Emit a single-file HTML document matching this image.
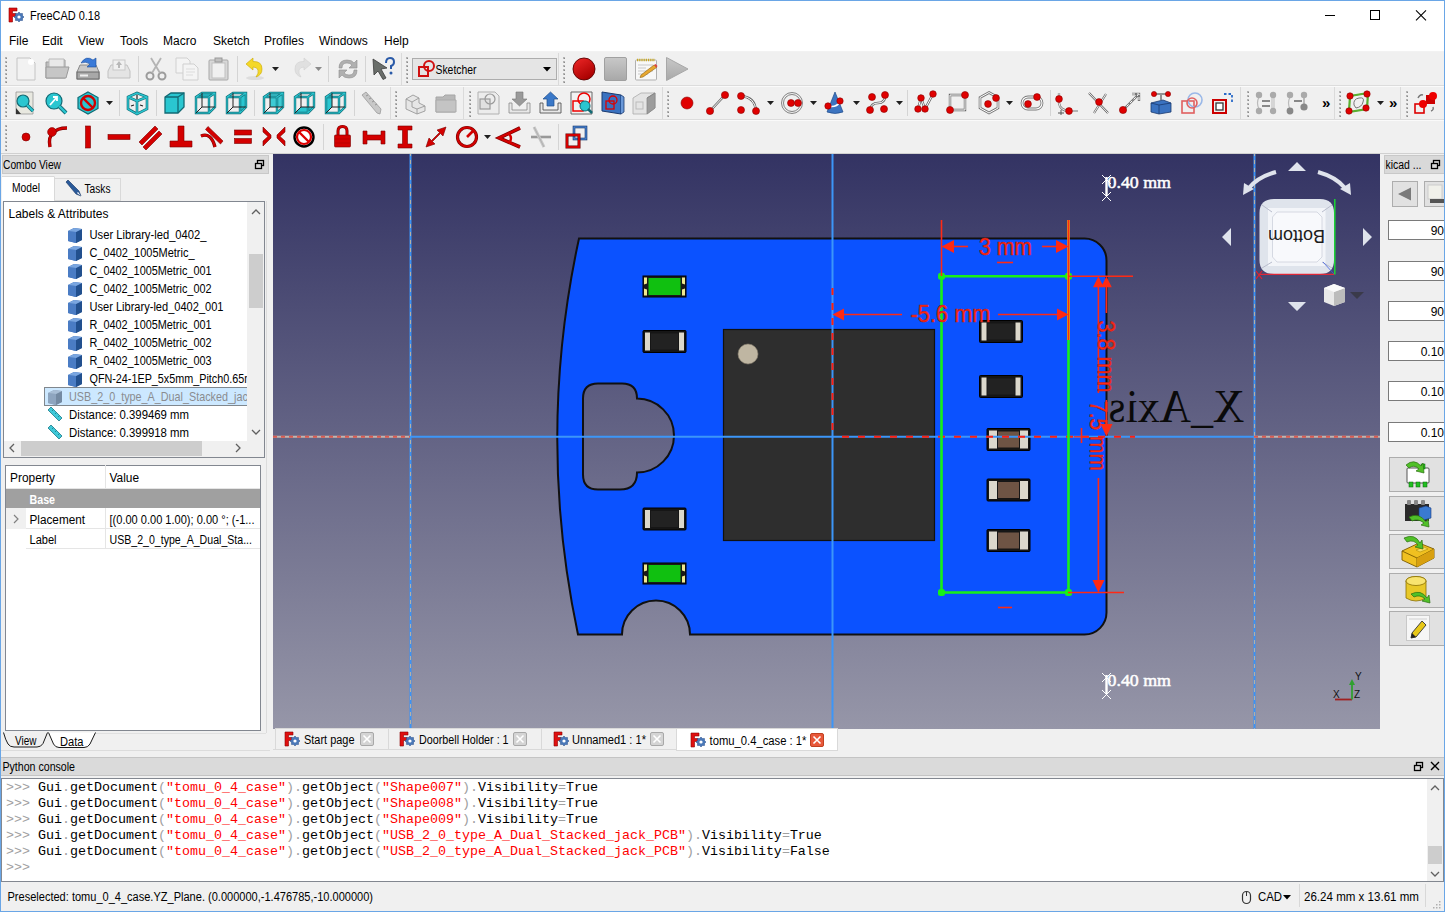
<!DOCTYPE html>
<html><head><meta charset="utf-8"><title>FreeCAD</title>
<style>html,body{margin:0;padding:0;background:#f0f0f0;overflow:hidden}svg{display:block}</style></head>
<body><svg width="1445" height="912" viewBox="0 0 1445 912">
<rect x="0" y="0" width="1445" height="912" fill="#f0f0f0" />
<rect x="0" y="0" width="1445" height="52" fill="#ffffff" />
<line x1="0" y1="51.5" x2="1445" y2="51.5" stroke="#f2f2f2" stroke-width="1" />
<g transform="translate(8,7) scale(1.0)"><path d="M1,1 H9 V4 H4.5 V6.5 H8 V9.5 H4.5 V15 H1 Z" fill="#e01010" stroke="#8a0000" stroke-width="0.6"/><polygon points="16.00,10.00 14.51,11.45 14.54,13.54 12.45,13.51 11.00,15.00 9.55,13.51 7.46,13.54 7.49,11.45 6.00,10.00 7.49,8.55 7.46,6.46 9.55,6.49 11.00,5.00 12.45,6.49 14.54,6.46 14.51,8.55" fill="#4a78b8" stroke="#2a4f8a" stroke-width="0.5"/><circle cx="11" cy="10" r="1.6" fill="#fff"/></g>
<text x="30" y="20" font-family="'Liberation Sans', sans-serif" font-size="12.5" fill="#000" font-weight="normal" text-anchor="start" textLength="70" lengthAdjust="spacingAndGlyphs" >FreeCAD 0.18</text>
<line x1="1325" y1="15.5" x2="1335" y2="15.5" stroke="#000" stroke-width="1" />
<rect x="1370.5" y="10.5" width="9" height="9" fill="none" stroke="#000" stroke-width="1" />
<line x1="1416" y1="10.3" x2="1426" y2="20.3" stroke="#000" stroke-width="1.1" />
<line x1="1426" y1="10.3" x2="1416" y2="20.3" stroke="#000" stroke-width="1.1" />
<text x="9" y="45" font-family="'Liberation Sans', sans-serif" font-size="12" fill="#000" font-weight="normal" text-anchor="start" >File</text>
<text x="42" y="45" font-family="'Liberation Sans', sans-serif" font-size="12" fill="#000" font-weight="normal" text-anchor="start" >Edit</text>
<text x="78" y="45" font-family="'Liberation Sans', sans-serif" font-size="12" fill="#000" font-weight="normal" text-anchor="start" >View</text>
<text x="120" y="45" font-family="'Liberation Sans', sans-serif" font-size="12" fill="#000" font-weight="normal" text-anchor="start" >Tools</text>
<text x="163" y="45" font-family="'Liberation Sans', sans-serif" font-size="12" fill="#000" font-weight="normal" text-anchor="start" >Macro</text>
<text x="213" y="45" font-family="'Liberation Sans', sans-serif" font-size="12" fill="#000" font-weight="normal" text-anchor="start" >Sketch</text>
<text x="264" y="45" font-family="'Liberation Sans', sans-serif" font-size="12" fill="#000" font-weight="normal" text-anchor="start" >Profiles</text>
<text x="319" y="45" font-family="'Liberation Sans', sans-serif" font-size="12" fill="#000" font-weight="normal" text-anchor="start" >Windows</text>
<text x="384" y="45" font-family="'Liberation Sans', sans-serif" font-size="12" fill="#000" font-weight="normal" text-anchor="start" >Help</text>
<line x1="0" y1="85.5" x2="1445" y2="85.5" stroke="#dcdcdc" stroke-width="1" />
<line x1="0" y1="86.5" x2="1445" y2="86.5" stroke="#fafafa" stroke-width="1" />
<line x1="0" y1="119.5" x2="1445" y2="119.5" stroke="#dcdcdc" stroke-width="1" />
<line x1="0" y1="120.5" x2="1445" y2="120.5" stroke="#fafafa" stroke-width="1" />
<line x1="0" y1="153.5" x2="1445" y2="153.5" stroke="#d0d0d0" stroke-width="1" />
<rect x="5" y="57" width="2" height="2" fill="#b4b4b4" />
<rect x="6" y="58" width="1" height="1" fill="#8c8c8c" />
<rect x="5" y="61" width="2" height="2" fill="#b4b4b4" />
<rect x="6" y="62" width="1" height="1" fill="#8c8c8c" />
<rect x="5" y="65" width="2" height="2" fill="#b4b4b4" />
<rect x="6" y="66" width="1" height="1" fill="#8c8c8c" />
<rect x="5" y="69" width="2" height="2" fill="#b4b4b4" />
<rect x="6" y="70" width="1" height="1" fill="#8c8c8c" />
<rect x="5" y="73" width="2" height="2" fill="#b4b4b4" />
<rect x="6" y="74" width="1" height="1" fill="#8c8c8c" />
<rect x="5" y="77" width="2" height="2" fill="#b4b4b4" />
<rect x="6" y="78" width="1" height="1" fill="#8c8c8c" />
<rect x="5" y="81" width="2" height="2" fill="#b4b4b4" />
<rect x="6" y="82" width="1" height="1" fill="#8c8c8c" />
<g transform="translate(16,57) scale(1)"><path d="M1,1 H14 L19,6 V23 H1 Z" fill="#f2f2f2" stroke="#c4c4c4"/><circle cx="15" cy="5" r="3" fill="#fff"/></g>
<g transform="translate(45,57) scale(1)"><path d="M1,5 H9 L11,3 H20 V21 H1 Z" fill="#bdbdbd" stroke="#9a9a9a"/><path d="M4,2 H19 V12 H4Z" fill="#e8e8e8" stroke="#bbb"/><path d="M1,10 H24 L21,21 H1 Z" fill="#c6c6c6" stroke="#9a9a9a"/></g>
<g transform="translate(76,57) scale(1)"><path d="M1,15 L4,8 H20 L23,15 V22 H1 Z" fill="#c8c8c8" stroke="#8a8a8a"/><rect x="1" y="15" width="22" height="7" fill="#a8a8a8" stroke="#6a6a6a"/><rect x="4" y="17.5" width="8" height="2" fill="#eee"/><path d="M5,6 Q10,-2 17,3 L20,1 V10 H11 L14,7 Q10,4 5,6Z" fill="#3a7ad8" stroke="#1d4f9c" stroke-width="0.6"/></g>
<g transform="translate(107,57) scale(1)"><path d="M1,14 L4,8 H20 L23,14 V21 H1 Z" fill="#e4e4e4" stroke="#c0c0c0"/><rect x="6" y="3" width="12" height="10" fill="#f0f0f0" stroke="#c8c8c8"/><path d="M12,4 L15,8 H13 V11 H11 V8 H9Z" fill="#b8b8b8"/></g>
<line x1="138.5" y1="56" x2="138.5" y2="82" stroke="#d4d4d4" stroke-width="1" />
<g transform="translate(145,57) scale(1)"><circle cx="5" cy="19" r="3.5" fill="none" stroke="#9c9c9c" stroke-width="2"/><circle cx="17" cy="19" r="3.5" fill="none" stroke="#9c9c9c" stroke-width="2"/><path d="M7,16 L16,1 M15,16 L6,1" stroke="#b4b4b4" stroke-width="1.8"/></g>
<g transform="translate(175,57) scale(1)"><path d="M1,1 H12 L15,4 V16 H1Z" fill="#f4f4f4" stroke="#d0d0d0"/><path d="M8,7 H19 L23,11 V23 H8Z" fill="#f4f4f4" stroke="#cfcfcf"/><path d="M11,12 H20 M11,15 H20 M11,18 H18" stroke="#dcdcdc"/></g>
<g transform="translate(207,57) scale(1)"><rect x="2" y="3" width="19" height="20" rx="1" fill="#d8d8d8" stroke="#a8a8a8"/><rect x="5" y="6" width="13" height="15" fill="#f0f0f0" stroke="#c0c0c0"/><rect x="8" y="1" width="7" height="4" fill="#c0c0c0" stroke="#999"/></g>
<line x1="237.5" y1="56" x2="237.5" y2="82" stroke="#d4d4d4" stroke-width="1" />
<g transform="translate(244,57) scale(1)"><ellipse cx="11" cy="21" rx="9" ry="2" fill="#000" opacity="0.08"/><path d="M2,7 L9,1 V4.5 Q18,4 18,12 Q18,18 12,20 Q15,16 14,13 Q13,10 9,10 V13Z" fill="#f4d828" stroke="#c9a800" stroke-width="0.6"/></g>
<path d="M272,67 h7 l-3.5,4 z" fill="#202020"/>
<g transform="translate(289,57) scale(1)"><path d="M22,7 L15,1 V4.5 Q6,4 6,12 Q6,18 12,20 Q9,16 10,13 Q11,10 15,10 V13Z" fill="#e0e0e0" stroke="#d0d0d0" stroke-width="0.6"/></g>
<path d="M315,67 h7 l-3.5,4 z" fill="#8a8a8a"/>
<line x1="328.5" y1="56" x2="328.5" y2="82" stroke="#d4d4d4" stroke-width="1" />
<g transform="translate(336,57) scale(1)"><path d="M3,11 Q3,3 11,3 Q16,3 18,6 L21,3 V11 H13 L16,8 Q14,6 11,6 Q6,6 6,11Z" fill="#b0b0b0" stroke="#8e8e8e" stroke-width="0.6"/><path d="M21,13 Q21,21 13,21 Q8,21 6,18 L3,21 V13 H11 L8,16 Q10,18 13,18 Q18,18 18,13Z" fill="#b0b0b0" stroke="#8e8e8e" stroke-width="0.6"/></g>
<line x1="365.5" y1="56" x2="365.5" y2="82" stroke="#d4d4d4" stroke-width="1" />
<g transform="translate(371,57) scale(1)"><path d="M2,2 L16,11 L10,12 L15,21 L12,22.5 L7,14 L3,18Z" fill="#6a6e6a" stroke="#3c3c3c" stroke-width="0.8"/><path d="M15,6 Q15,1 19,1 Q23,1 23,5 Q23,8 20,9 V12" fill="none" stroke="#2a5aa8" stroke-width="2"/><circle cx="20" cy="16" r="1.5" fill="#2a5aa8"/></g>
<line x1="401.5" y1="53" x2="401.5" y2="85" stroke="#dadada" stroke-width="1" />
<rect x="406" y="57" width="2" height="2" fill="#b4b4b4" />
<rect x="407" y="58" width="1" height="1" fill="#8c8c8c" />
<rect x="406" y="61" width="2" height="2" fill="#b4b4b4" />
<rect x="407" y="62" width="1" height="1" fill="#8c8c8c" />
<rect x="406" y="65" width="2" height="2" fill="#b4b4b4" />
<rect x="407" y="66" width="1" height="1" fill="#8c8c8c" />
<rect x="406" y="69" width="2" height="2" fill="#b4b4b4" />
<rect x="407" y="70" width="1" height="1" fill="#8c8c8c" />
<rect x="406" y="73" width="2" height="2" fill="#b4b4b4" />
<rect x="407" y="74" width="1" height="1" fill="#8c8c8c" />
<rect x="406" y="77" width="2" height="2" fill="#b4b4b4" />
<rect x="407" y="78" width="1" height="1" fill="#8c8c8c" />
<rect x="406" y="81" width="2" height="2" fill="#b4b4b4" />
<rect x="407" y="82" width="1" height="1" fill="#8c8c8c" />
<rect x="412.5" y="58.5" width="144" height="21" fill="#e5e5e5" stroke="#adadad" stroke-width="1" />
<g transform="translate(418,59) scale(1)"><rect x="1" y="8" width="9" height="9" fill="none" stroke="#d01010" stroke-width="2"/><circle cx="11" cy="7" r="5" fill="none" stroke="#d01010" stroke-width="2"/></g>
<text x="435.5" y="74" font-family="'Liberation Sans', sans-serif" font-size="12" fill="#000" font-weight="normal" text-anchor="start" textLength="41" lengthAdjust="spacingAndGlyphs" >Sketcher</text>
<path d="M543,67 h8 l-4,4.5 z" fill="#000"/>
<line x1="558.5" y1="53" x2="558.5" y2="85" stroke="#dadada" stroke-width="1" />
<rect x="563" y="57" width="2" height="2" fill="#b4b4b4" />
<rect x="564" y="58" width="1" height="1" fill="#8c8c8c" />
<rect x="563" y="61" width="2" height="2" fill="#b4b4b4" />
<rect x="564" y="62" width="1" height="1" fill="#8c8c8c" />
<rect x="563" y="65" width="2" height="2" fill="#b4b4b4" />
<rect x="564" y="66" width="1" height="1" fill="#8c8c8c" />
<rect x="563" y="69" width="2" height="2" fill="#b4b4b4" />
<rect x="564" y="70" width="1" height="1" fill="#8c8c8c" />
<rect x="563" y="73" width="2" height="2" fill="#b4b4b4" />
<rect x="564" y="74" width="1" height="1" fill="#8c8c8c" />
<rect x="563" y="77" width="2" height="2" fill="#b4b4b4" />
<rect x="564" y="78" width="1" height="1" fill="#8c8c8c" />
<rect x="563" y="81" width="2" height="2" fill="#b4b4b4" />
<rect x="564" y="82" width="1" height="1" fill="#8c8c8c" />
<defs><linearGradient id="grec" x1="0" y1="0" x2="0.6" y2="1"><stop offset="0" stop-color="#f02828"/><stop offset="1" stop-color="#a80000"/></linearGradient><linearGradient id="ggray" x1="0" y1="0" x2="0" y2="1"><stop offset="0" stop-color="#c8c8c8"/><stop offset="1" stop-color="#a8a8a8"/></linearGradient></defs>
<g transform="translate(572,57) scale(1)"><circle cx="12" cy="12" r="11" fill="url(#grec)" stroke="#5a0000" stroke-width="0.9"/></g>
<g transform="translate(603,57) scale(1)"><rect x="1.5" y="0.5" width="22" height="23" rx="1.5" fill="url(#ggray)" stroke="#a0a0a0"/></g>
<g transform="translate(634,57) scale(1)"><rect x="1.5" y="3" width="21" height="20" rx="1" fill="#f8f8f8" stroke="#b0b0b0"/><path d="M4,8 H19 M4,11 H12 M4,14 H19 M4,17 H14" stroke="#c8c8c8" stroke-width="1.2"/><path d="M3,3 H21" stroke="#c8a820" stroke-width="2.5" stroke-dasharray="1.2,1"/><path d="M7,18 L20,8 L22.5,10.5 L9,20 L6,20.5Z" fill="#e8a830" stroke="#8a6010" stroke-width="0.6"/><path d="M20,8 L22.5,10.5 L23.5,9 L21.5,7Z" fill="#e04040"/></g>
<g transform="translate(665,57) scale(1)"><path d="M1.5,0.5 L23,12 L1.5,23.5Z" fill="url(#ggray)" stroke="#a8a8a8"/></g>
<rect x="5" y="91" width="2" height="2" fill="#b4b4b4" />
<rect x="6" y="92" width="1" height="1" fill="#8c8c8c" />
<rect x="5" y="95" width="2" height="2" fill="#b4b4b4" />
<rect x="6" y="96" width="1" height="1" fill="#8c8c8c" />
<rect x="5" y="99" width="2" height="2" fill="#b4b4b4" />
<rect x="6" y="100" width="1" height="1" fill="#8c8c8c" />
<rect x="5" y="103" width="2" height="2" fill="#b4b4b4" />
<rect x="6" y="104" width="1" height="1" fill="#8c8c8c" />
<rect x="5" y="107" width="2" height="2" fill="#b4b4b4" />
<rect x="6" y="108" width="1" height="1" fill="#8c8c8c" />
<rect x="5" y="111" width="2" height="2" fill="#b4b4b4" />
<rect x="6" y="112" width="1" height="1" fill="#8c8c8c" />
<rect x="5" y="115" width="2" height="2" fill="#b4b4b4" />
<rect x="6" y="116" width="1" height="1" fill="#8c8c8c" />
<g transform="translate(13,91) scale(1)"><path d="M3,1 H20 V23 H3Z" fill="#e8e8e0" stroke="#8a8a8a" stroke-width="0.7"/><path d="M3,23 V17 L8,23Z" fill="#333"/><circle cx="10" cy="10" r="6" fill="#2ac6d0" stroke="#126a74" stroke-width="1.2"/><path d="M14,14 L20,20" stroke="#126a74" stroke-width="3.5"/><path d="M14,14 L20,20" stroke="#2ac6d0" stroke-width="2"/></g>
<g transform="translate(44,91) scale(1)"><circle cx="10" cy="10" r="8" fill="#2ac6d0" stroke="#126a74" stroke-width="1.2"/><path d="M15,15 L22,22" stroke="#126a74" stroke-width="4"/><path d="M15,15 L22,22" stroke="#2ac6d0" stroke-width="2.4"/><path d="M6,14 L13,6 M9,6 H13 V10" stroke="#fff" stroke-width="1.8" fill="none"/></g>
<g transform="translate(76,91) scale(1)"><path d="M12,1 L22,6.5 V17.5 L12,23 L2,17.5 V6.5Z" fill="#2ac6d0" stroke="#126a74" stroke-width="1.2"/><circle cx="12" cy="12" r="7" fill="none" stroke="#d00000" stroke-width="2.4"/><path d="M7,7 L17,17" stroke="#d00000" stroke-width="2.4"/></g>
<path d="M106,101 h7 l-3.5,4 z" fill="#202020"/>
<line x1="119.5" y1="90" x2="119.5" y2="116" stroke="#d4d4d4" stroke-width="1" />
<g transform="translate(125,91) scale(1)"><path d="M3,6 L12,2 L22,6 V18 L12,23 L3,18Z M3,6 L12,10 L22,6 M12,10 V23" fill="none" stroke="#126a74" stroke-width="2.6"/><path d="M3,6 L12,2 L22,6 V18 L12,23 L3,18Z M3,6 L12,10 L22,6 M12,10 V23" fill="none" stroke="#2ac6d0" stroke-width="1.4"/><path d="M12,4 V8 M6,15 L9,14 M18,15 L15,14" stroke="#222" stroke-width="1.2"/></g>
<line x1="156.5" y1="90" x2="156.5" y2="116" stroke="#d4d4d4" stroke-width="1" />
<g transform="translate(162,91) scale(1)"><path d="M3,6 L9,2 H22 V16 L16,22 H3Z" fill="#2ac6d0" stroke="#126a74" stroke-width="1.3"/><path d="M3,6 H16 V22 M16,6 L22,2" fill="none" stroke="#126a74" stroke-width="1.3"/></g>
<g transform="translate(193,91) scale(1)"><path d="M3,6 L9,2 H22 L16,6Z" fill="#2ac6d0"/><path d="M3,6 L9,2 H22 V16 L16,22 H3Z M3,6 H16 V22 M16,6 L22,2" fill="none" stroke="#126a74" stroke-width="2.4"/><path d="M3,6 L9,2 H22 V16 L16,22 H3Z M3,6 H16 V22 M16,6 L22,2" fill="none" stroke="#2ac6d0" stroke-width="1.1"/><path d="M9,2 V16 H22 M9,16 L3,22" fill="none" stroke="#222" stroke-width="1"/></g>
<g transform="translate(224,91) scale(1)"><path d="M16,6 L22,2 V16 L16,22Z" fill="#2ac6d0"/><path d="M3,6 L9,2 H22 V16 L16,22 H3Z M3,6 H16 V22 M16,6 L22,2" fill="none" stroke="#126a74" stroke-width="2.4"/><path d="M3,6 L9,2 H22 V16 L16,22 H3Z M3,6 H16 V22 M16,6 L22,2" fill="none" stroke="#2ac6d0" stroke-width="1.1"/><path d="M9,2 V16 H22 M9,16 L3,22" fill="none" stroke="#222" stroke-width="1"/></g>
<line x1="254.5" y1="90" x2="254.5" y2="116" stroke="#d4d4d4" stroke-width="1" />
<g transform="translate(261,91) scale(1)"><path d="M9,2 H22 V16 H9Z" fill="#2ac6d0" opacity="0.9"/><path d="M3,6 L9,2 H22 V16 L16,22 H3Z M3,6 H16 V22 M16,6 L22,2" fill="none" stroke="#126a74" stroke-width="2.4"/><path d="M3,6 L9,2 H22 V16 L16,22 H3Z M3,6 H16 V22 M16,6 L22,2" fill="none" stroke="#2ac6d0" stroke-width="1.1"/><path d="M9,2 V16 H22 M9,16 L3,22" fill="none" stroke="#222" stroke-width="1"/></g>
<g transform="translate(292,91) scale(1)"><path d="M3,22 L9,16 H22 L16,22Z" fill="#2ac6d0"/><path d="M3,6 L9,2 H22 V16 L16,22 H3Z M3,6 H16 V22 M16,6 L22,2" fill="none" stroke="#126a74" stroke-width="2.4"/><path d="M3,6 L9,2 H22 V16 L16,22 H3Z M3,6 H16 V22 M16,6 L22,2" fill="none" stroke="#2ac6d0" stroke-width="1.1"/><path d="M9,2 V16 H22 M9,16 L3,22" fill="none" stroke="#222" stroke-width="1"/></g>
<g transform="translate(323,91) scale(1)"><path d="M3,6 L9,2 V16 L3,22Z" fill="#2ac6d0"/><path d="M3,6 L9,2 H22 V16 L16,22 H3Z M3,6 H16 V22 M16,6 L22,2" fill="none" stroke="#126a74" stroke-width="2.4"/><path d="M3,6 L9,2 H22 V16 L16,22 H3Z M3,6 H16 V22 M16,6 L22,2" fill="none" stroke="#2ac6d0" stroke-width="1.1"/><path d="M9,2 V16 H22 M9,16 L3,22" fill="none" stroke="#222" stroke-width="1"/></g>
<line x1="354.5" y1="90" x2="354.5" y2="116" stroke="#d4d4d4" stroke-width="1" />
<g transform="translate(358,91) scale(1)"><path d="M4,4 L8,1 L23,18 L22,23 L19,22Z" fill="#c8c8c8" stroke="#9a9a9a" stroke-width="0.8"/><path d="M8,5 L10,4 M11,8 L13,7 M14,11 L16,10 M17,14 L19,13" stroke="#888" stroke-width="0.8"/></g>
<line x1="390.5" y1="87" x2="390.5" y2="119" stroke="#dadada" stroke-width="1" />
<rect x="395" y="91" width="2" height="2" fill="#b4b4b4" />
<rect x="396" y="92" width="1" height="1" fill="#8c8c8c" />
<rect x="395" y="95" width="2" height="2" fill="#b4b4b4" />
<rect x="396" y="96" width="1" height="1" fill="#8c8c8c" />
<rect x="395" y="99" width="2" height="2" fill="#b4b4b4" />
<rect x="396" y="100" width="1" height="1" fill="#8c8c8c" />
<rect x="395" y="103" width="2" height="2" fill="#b4b4b4" />
<rect x="396" y="104" width="1" height="1" fill="#8c8c8c" />
<rect x="395" y="107" width="2" height="2" fill="#b4b4b4" />
<rect x="396" y="108" width="1" height="1" fill="#8c8c8c" />
<rect x="395" y="111" width="2" height="2" fill="#b4b4b4" />
<rect x="396" y="112" width="1" height="1" fill="#8c8c8c" />
<rect x="395" y="115" width="2" height="2" fill="#b4b4b4" />
<rect x="396" y="116" width="1" height="1" fill="#8c8c8c" />
<g transform="translate(403,91) scale(1)"><path d="M3,8 L10,4 L16,7 V12 L22,15 V20 L14,23 L3,18Z" fill="#e6e6e6" stroke="#9a9a9a" stroke-width="0.9"/><path d="M3,8 L9,11 V16 L14,18 V23 M9,11 L16,7 M14,18 L22,15" fill="none" stroke="#9a9a9a" stroke-width="0.9"/></g>
<g transform="translate(434,91) scale(1)"><path d="M2,6 H9 L11,4 H21 V21 H2Z" fill="#b8b8b8" stroke="#a6a6a6"/><path d="M2,9 H22 V21 H2Z" fill="#c4c4c4" stroke="#aaa"/></g>
<line x1="463.5" y1="87" x2="463.5" y2="119" stroke="#dadada" stroke-width="1" />
<rect x="469" y="91" width="2" height="2" fill="#b4b4b4" />
<rect x="470" y="92" width="1" height="1" fill="#8c8c8c" />
<rect x="469" y="95" width="2" height="2" fill="#b4b4b4" />
<rect x="470" y="96" width="1" height="1" fill="#8c8c8c" />
<rect x="469" y="99" width="2" height="2" fill="#b4b4b4" />
<rect x="470" y="100" width="1" height="1" fill="#8c8c8c" />
<rect x="469" y="103" width="2" height="2" fill="#b4b4b4" />
<rect x="470" y="104" width="1" height="1" fill="#8c8c8c" />
<rect x="469" y="107" width="2" height="2" fill="#b4b4b4" />
<rect x="470" y="108" width="1" height="1" fill="#8c8c8c" />
<rect x="469" y="111" width="2" height="2" fill="#b4b4b4" />
<rect x="470" y="112" width="1" height="1" fill="#8c8c8c" />
<rect x="469" y="115" width="2" height="2" fill="#b4b4b4" />
<rect x="470" y="116" width="1" height="1" fill="#8c8c8c" />
<g transform="translate(477,91) scale(1)"><path d="M1,1 H18 L22,5 V23 H1Z" fill="#ececec" stroke="#b0b0b0"/><rect x="3" y="8" width="10" height="10" fill="#e0e0e0" stroke="#999" stroke-width="1.2"/><circle cx="13" cy="8" r="5" fill="none" stroke="#999" stroke-width="1.2"/></g>
<g transform="translate(508,91) scale(1)"><path d="M1,12 V22 H22 V12 H19 V19 H4 V12Z" fill="#e8e8e8" stroke="#888" stroke-width="0.8"/><path d="M8,1 H15 V8 H19 L11.5,15 L4,8 H8Z" fill="#9a9a9a" stroke="#777" stroke-width="0.6"/></g>
<g transform="translate(539,91) scale(1)"><path d="M1,12 V22 H22 V12 H19 V19 H4 V12Z" fill="#e8e8e8" stroke="#555" stroke-width="0.9"/><path d="M8,15 H15 V8 H19 L11.5,1 L4,8 H8Z" fill="#3a78c8" stroke="#1f4d8a" stroke-width="0.7"/></g>
<g transform="translate(570,91) scale(1)"><path d="M1,1 H22 V23 H1Z" fill="#f2f2f2" stroke="#666"/><rect x="3" y="10" width="10" height="10" fill="none" stroke="#e00" stroke-width="1.5"/><circle cx="14" cy="8" r="6" fill="none" stroke="#e00" stroke-width="1.5"/><circle cx="15" cy="15" r="5" fill="#2ac6d0" stroke="#126a74"/><path d="M18,18 L22,22" stroke="#126a74" stroke-width="2.5"/></g>
<g transform="translate(601,91) scale(1)"><path d="M1,1 L20,4 V23 L1,20Z" fill="#3a72c0" stroke="#1a3a70" stroke-width="1"/><path d="M20,4 L23,6 V21 L20,23" fill="#6a98d8" stroke="#1a3a70" stroke-width="0.8"/><rect x="5" y="10" width="8" height="8" fill="none" stroke="#d00" stroke-width="1.3"/><circle cx="12" cy="9" r="4" fill="none" stroke="#d00" stroke-width="1.3"/></g>
<g transform="translate(632,91) scale(1)"><path d="M1,7 L9,2 H23 V17 L15,23 H1Z" fill="#e4e4e4" stroke="#aaa" stroke-width="0.8"/><path d="M15,7 V23 L23,17 V2Z" fill="#9c9c9c" stroke="#888" stroke-width="0.8"/><path d="M15,7 L23,2" stroke="#888"/><rect x="4" y="11" width="7" height="7" fill="none" stroke="#bbb"/></g>
<line x1="662.5" y1="87" x2="662.5" y2="119" stroke="#dadada" stroke-width="1" />
<rect x="667" y="91" width="2" height="2" fill="#b4b4b4" />
<rect x="668" y="92" width="1" height="1" fill="#8c8c8c" />
<rect x="667" y="95" width="2" height="2" fill="#b4b4b4" />
<rect x="668" y="96" width="1" height="1" fill="#8c8c8c" />
<rect x="667" y="99" width="2" height="2" fill="#b4b4b4" />
<rect x="668" y="100" width="1" height="1" fill="#8c8c8c" />
<rect x="667" y="103" width="2" height="2" fill="#b4b4b4" />
<rect x="668" y="104" width="1" height="1" fill="#8c8c8c" />
<rect x="667" y="107" width="2" height="2" fill="#b4b4b4" />
<rect x="668" y="108" width="1" height="1" fill="#8c8c8c" />
<rect x="667" y="111" width="2" height="2" fill="#b4b4b4" />
<rect x="668" y="112" width="1" height="1" fill="#8c8c8c" />
<rect x="667" y="115" width="2" height="2" fill="#b4b4b4" />
<rect x="668" y="116" width="1" height="1" fill="#8c8c8c" />
<g transform="translate(675,91) scale(1)"><circle cx="12" cy="12" r="6" fill="#e00000" stroke="#8a0000" stroke-width="0.6"/></g>
<g transform="translate(706,91) scale(1)"><path d="M4,20 L19,4" stroke="#666" stroke-width="2.4"/><path d="M4,20 L19,4" stroke="#fff" stroke-width="1"/><circle cx="4" cy="20" r="3.6" fill="#e00000" stroke="#8a0000" stroke-width="0.6"/><circle cx="19" cy="4" r="3.6" fill="#e00000" stroke="#8a0000" stroke-width="0.6"/></g>
<g transform="translate(737,91) scale(1)"><path d="M4,5 Q18,6 19,20" fill="none" stroke="#666" stroke-width="2.4"/><path d="M4,5 Q18,6 19,20" fill="none" stroke="#fff" stroke-width="1"/><circle cx="4" cy="5" r="3.5" fill="#e00000" stroke="#8a0000" stroke-width="0.6"/><circle cx="4" cy="19" r="3.5" fill="#e00000" stroke="#8a0000" stroke-width="0.6"/><circle cx="19" cy="20" r="3.5" fill="#e00000" stroke="#8a0000" stroke-width="0.6"/></g>
<path d="M767,101 h7 l-3.5,4 z" fill="#202020"/>
<g transform="translate(780,91) scale(1)"><circle cx="12" cy="12" r="10.5" fill="none" stroke="#777" stroke-width="0.9"/><circle cx="12" cy="12" r="8.5" fill="none" stroke="#777" stroke-width="0.9"/><circle cx="11" cy="12" r="3.5" fill="#e00000" stroke="#8a0000" stroke-width="0.6"/><circle cx="18" cy="12" r="3.5" fill="#e00000" stroke="#8a0000" stroke-width="0.6"/></g>
<path d="M810,101 h7 l-3.5,4 z" fill="#202020"/>
<g transform="translate(823,91) scale(1)"><path d="M4,21 L12,1 L20,21 Q12,24 4,21Z" fill="#3c74c0" stroke="#1e4a8a" stroke-width="0.7"/><path d="M5,15 Q13,17 17,11" fill="none" stroke="#fff" stroke-width="1.5"/><circle cx="5" cy="15" r="3.2" fill="#e00000" stroke="#8a0000" stroke-width="0.6"/><circle cx="17" cy="10" r="3.2" fill="#e00000" stroke="#8a0000" stroke-width="0.6"/></g>
<path d="M853,101 h7 l-3.5,4 z" fill="#202020"/>
<g transform="translate(866,91) scale(1)"><path d="M4,19 Q5,12 12,12 Q19,12 19,5" fill="none" stroke="#666" stroke-width="2.4"/><path d="M4,19 Q5,12 12,12 Q19,12 19,5" fill="none" stroke="#fff" stroke-width="1"/><circle cx="6" cy="6" r="3.5" fill="#e00000" stroke="#8a0000" stroke-width="0.6"/><circle cx="19" cy="4" r="3.5" fill="#e00000" stroke="#8a0000" stroke-width="0.6"/><circle cx="4" cy="19" r="3.5" fill="#e00000" stroke="#8a0000" stroke-width="0.6"/><circle cx="18" cy="18" r="3.5" fill="#e00000" stroke="#8a0000" stroke-width="0.6"/></g>
<path d="M896,101 h7 l-3.5,4 z" fill="#202020"/>
<line x1="907.5" y1="90" x2="907.5" y2="116" stroke="#d4d4d4" stroke-width="1" />
<g transform="translate(915,91) scale(1)"><path d="M3,18 L6,7 L10,18 L18,3" fill="none" stroke="#666" stroke-width="2.4"/><path d="M3,18 L6,7 L10,18 L18,3" fill="none" stroke="#fff" stroke-width="1"/><circle cx="3" cy="18" r="3.3" fill="#e00000" stroke="#8a0000" stroke-width="0.6"/><circle cx="6" cy="7" r="3.3" fill="#e00000" stroke="#8a0000" stroke-width="0.6"/><circle cx="10" cy="18" r="3.3" fill="#e00000" stroke="#8a0000" stroke-width="0.6"/><circle cx="18" cy="3" r="3.3" fill="#e00000" stroke="#8a0000" stroke-width="0.6"/></g>
<g transform="translate(946,91) scale(1)"><path d="M4,4 H19 V19 H4Z" fill="none" stroke="#666" stroke-width="2.4"/><path d="M4,4 H19 V19 H4Z" fill="none" stroke="#fff" stroke-width="1"/><circle cx="4" cy="19" r="3.5" fill="#e00000" stroke="#8a0000" stroke-width="0.6"/><circle cx="19" cy="4" r="3.5" fill="#e00000" stroke="#8a0000" stroke-width="0.6"/></g>
<g transform="translate(977,91) scale(1)"><path d="M12,1.5 L21,6.5 V17 L12,22 L3,17 V6.5Z" fill="none" stroke="#777" stroke-width="2.6"/><path d="M12,1.5 L21,6.5 V17 L12,22 L3,17 V6.5Z" fill="none" stroke="#fff" stroke-width="1"/><circle cx="11" cy="13" r="3.4" fill="#e00000" stroke="#8a0000" stroke-width="0.6"/><circle cx="19" cy="7" r="3.4" fill="#e00000" stroke="#8a0000" stroke-width="0.6"/></g>
<path d="M1006,101 h7 l-3.5,4 z" fill="#202020"/>
<g transform="translate(1020,91) scale(1)"><path d="M8,6 H16 A6,6 0 0 1 16,18 H8 A6,6 0 0 1 8,6Z" fill="none" stroke="#777" stroke-width="2.8"/><path d="M8,6 H16 A6,6 0 0 1 16,18 H8 A6,6 0 0 1 8,6Z" fill="none" stroke="#fff" stroke-width="1.1"/><circle cx="8" cy="13" r="3.4" fill="#e00000" stroke="#8a0000" stroke-width="0.6"/><circle cx="17" cy="6" r="3.4" fill="#e00000" stroke="#8a0000" stroke-width="0.6"/></g>
<line x1="1050.5" y1="90" x2="1050.5" y2="116" stroke="#d4d4d4" stroke-width="1" />
<g transform="translate(1056,91) scale(1)"><path d="M3,2 V12 Q4,20 14,20 H22" fill="none" stroke="#777" stroke-width="2.2"/><path d="M3,2 V12 Q4,20 14,20 H22" fill="none" stroke="#fff" stroke-width="0.9"/><path d="M2,22 H8 M5,19 V24" stroke="#555"/><circle cx="3" cy="8" r="3.4" fill="#e00000" stroke="#8a0000" stroke-width="0.6"/><circle cx="13" cy="20" r="3.4" fill="#e00000" stroke="#8a0000" stroke-width="0.6"/></g>
<g transform="translate(1087,91) scale(1)"><path d="M2,2 L21,22 M19,3 L7,22" stroke="#666" stroke-width="2.2"/><path d="M2,2 L21,22 M19,3 L7,22" stroke="#fff" stroke-width="0.9"/><circle cx="12" cy="11" r="3.4" fill="#e00000" stroke="#8a0000" stroke-width="0.6"/></g>
<g transform="translate(1118,91) scale(1)"><path d="M5,19 L20,4 M14,3 H21 V10" fill="none" stroke="#777" stroke-width="2.4"/><path d="M5,19 L20,4 M14,3 H21 V10" fill="none" stroke="#fff" stroke-width="1" stroke-dasharray="3,2"/><circle cx="5" cy="19" r="3.6" fill="#e00000" stroke="#8a0000" stroke-width="0.6"/></g>
<g transform="translate(1149,91) scale(1)"><path d="M2,12 L14,9 L22,12 V21 L10,23 L2,21Z" fill="#3a72c0" stroke="#1a3a70" stroke-width="0.8"/><path d="M2,12 L10,14 L22,12 M10,14 V23" fill="none" stroke="#1a3a70" stroke-width="0.8"/><path d="M12,9 V4 M5,3 H19" stroke="#333" stroke-width="1"/><circle cx="5" cy="3" r="2.6" fill="#e00000" stroke="#8a0000" stroke-width="0.6"/><circle cx="19" cy="3" r="2.6" fill="#e00000" stroke="#8a0000" stroke-width="0.6"/></g>
<g transform="translate(1180,91) scale(1)"><rect x="2" y="10" width="12" height="12" fill="none" stroke="#e06060" stroke-width="1.6"/><circle cx="15" cy="9" r="7" fill="none" stroke="#9ab8e8" stroke-width="1.6"/><circle cx="12" cy="12" r="5" fill="none" stroke="#e06060" stroke-width="1.6"/></g>
<g transform="translate(1211,91) scale(1)"><rect x="2" y="9" width="13" height="13" fill="none" stroke="#c00" stroke-width="2"/><rect x="5" y="12" width="7" height="7" fill="#fff" stroke="#333" stroke-width="1.3"/><path d="M13,3 H21 V11" fill="none" stroke="#2a6ac8" stroke-width="1.8" stroke-dasharray="2.5,2"/></g>
<line x1="1240.5" y1="87" x2="1240.5" y2="119" stroke="#dadada" stroke-width="1" />
<rect x="1247" y="91" width="2" height="2" fill="#b4b4b4" />
<rect x="1248" y="92" width="1" height="1" fill="#8c8c8c" />
<rect x="1247" y="95" width="2" height="2" fill="#b4b4b4" />
<rect x="1248" y="96" width="1" height="1" fill="#8c8c8c" />
<rect x="1247" y="99" width="2" height="2" fill="#b4b4b4" />
<rect x="1248" y="100" width="1" height="1" fill="#8c8c8c" />
<rect x="1247" y="103" width="2" height="2" fill="#b4b4b4" />
<rect x="1248" y="104" width="1" height="1" fill="#8c8c8c" />
<rect x="1247" y="107" width="2" height="2" fill="#b4b4b4" />
<rect x="1248" y="108" width="1" height="1" fill="#8c8c8c" />
<rect x="1247" y="111" width="2" height="2" fill="#b4b4b4" />
<rect x="1248" y="112" width="1" height="1" fill="#8c8c8c" />
<rect x="1247" y="115" width="2" height="2" fill="#b4b4b4" />
<rect x="1248" y="116" width="1" height="1" fill="#8c8c8c" />
<g transform="translate(1255,91) scale(1)"><path d="M4,6 Q1,12 4,18" fill="none" stroke="#bbb" stroke-width="1.2"/><path d="M17,6 V18 M19,6 V18" stroke="#bbb"/><circle cx="4" cy="4" r="3.2" fill="#aaa"/><circle cx="4" cy="20" r="3.2" fill="#aaa"/><circle cx="18" cy="4" r="3.2" fill="#aaa"/><circle cx="18" cy="20" r="3.2" fill="#aaa"/><path d="M7,10 H15 M7,15 H15" stroke="#888" stroke-width="2"/></g>
<g transform="translate(1286,91) scale(1)"><path d="M4,6 Q1,12 4,18" fill="none" stroke="#bbb" stroke-width="1.2"/><path d="M18,6 V16" stroke="#bbb" stroke-width="2"/><circle cx="4" cy="4" r="3.2" fill="#aaa"/><circle cx="4" cy="20" r="3.4" fill="#888"/><circle cx="18" cy="4" r="3.2" fill="#aaa"/><circle cx="18" cy="16" r="3.6" fill="#888"/><path d="M8,10 H16" stroke="#888" stroke-width="2"/></g>
<text x="1322" y="108" font-family="'Liberation Sans', sans-serif" font-size="15" fill="#000" font-weight="bold" text-anchor="start" >»</text>
<line x1="1334.5" y1="87" x2="1334.5" y2="119" stroke="#dadada" stroke-width="1" />
<rect x="1339" y="91" width="2" height="2" fill="#b4b4b4" />
<rect x="1340" y="92" width="1" height="1" fill="#8c8c8c" />
<rect x="1339" y="95" width="2" height="2" fill="#b4b4b4" />
<rect x="1340" y="96" width="1" height="1" fill="#8c8c8c" />
<rect x="1339" y="99" width="2" height="2" fill="#b4b4b4" />
<rect x="1340" y="100" width="1" height="1" fill="#8c8c8c" />
<rect x="1339" y="103" width="2" height="2" fill="#b4b4b4" />
<rect x="1340" y="104" width="1" height="1" fill="#8c8c8c" />
<rect x="1339" y="107" width="2" height="2" fill="#b4b4b4" />
<rect x="1340" y="108" width="1" height="1" fill="#8c8c8c" />
<rect x="1339" y="111" width="2" height="2" fill="#b4b4b4" />
<rect x="1340" y="112" width="1" height="1" fill="#8c8c8c" />
<rect x="1339" y="115" width="2" height="2" fill="#b4b4b4" />
<rect x="1340" y="116" width="1" height="1" fill="#8c8c8c" />
<g transform="translate(1347,91) scale(1)"><path d="M3,5 L21,2 L20,18 L2,21Z" fill="#f0f0f0" stroke="#2a2a2a" stroke-width="0.8"/><path d="M3,5 L21,2 L20,18 L2,21Z" fill="none" stroke="#5ab030" stroke-width="2.2"/><path d="M7,14 Q6,8 12,7 Q18,6 16,11 Q15,16 9,17Z" fill="none" stroke="#777" stroke-width="1"/><circle cx="3" cy="5" r="3.2" fill="#e00000" stroke="#8a0000" stroke-width="0.6"/><circle cx="20" cy="3" r="3.2" fill="#e00000" stroke="#8a0000" stroke-width="0.6"/><circle cx="19" cy="17" r="3.2" fill="#e00000" stroke="#8a0000" stroke-width="0.6"/><circle cx="2" cy="20" r="3.2" fill="#e00000" stroke="#8a0000" stroke-width="0.6"/></g>
<path d="M1377,101 h7 l-3.5,4 z" fill="#202020"/>
<text x="1389" y="108" font-family="'Liberation Sans', sans-serif" font-size="15" fill="#000" font-weight="bold" text-anchor="start" >»</text>
<line x1="1400.5" y1="87" x2="1400.5" y2="119" stroke="#dadada" stroke-width="1" />
<rect x="1406" y="91" width="2" height="2" fill="#b4b4b4" />
<rect x="1407" y="92" width="1" height="1" fill="#8c8c8c" />
<rect x="1406" y="95" width="2" height="2" fill="#b4b4b4" />
<rect x="1407" y="96" width="1" height="1" fill="#8c8c8c" />
<rect x="1406" y="99" width="2" height="2" fill="#b4b4b4" />
<rect x="1407" y="100" width="1" height="1" fill="#8c8c8c" />
<rect x="1406" y="103" width="2" height="2" fill="#b4b4b4" />
<rect x="1407" y="104" width="1" height="1" fill="#8c8c8c" />
<rect x="1406" y="107" width="2" height="2" fill="#b4b4b4" />
<rect x="1407" y="108" width="1" height="1" fill="#8c8c8c" />
<rect x="1406" y="111" width="2" height="2" fill="#b4b4b4" />
<rect x="1407" y="112" width="1" height="1" fill="#8c8c8c" />
<rect x="1406" y="115" width="2" height="2" fill="#b4b4b4" />
<rect x="1407" y="116" width="1" height="1" fill="#8c8c8c" />
<g transform="translate(1414,91) scale(1)"><rect x="1" y="13" width="9" height="9" fill="none" stroke="#d00" stroke-width="1.6"/><rect x="12" y="4" width="9" height="9" fill="#c00"/><circle cx="19" cy="5" r="4" fill="#e00"/><circle cx="9" cy="13" r="4" fill="#e00"/><path d="M4,7 Q6,3 9,4 M17,20 Q20,19 19,16" fill="none" stroke="#777" stroke-width="1.4"/></g>
<rect x="5" y="125" width="2" height="2" fill="#b4b4b4" />
<rect x="6" y="126" width="1" height="1" fill="#8c8c8c" />
<rect x="5" y="129" width="2" height="2" fill="#b4b4b4" />
<rect x="6" y="130" width="1" height="1" fill="#8c8c8c" />
<rect x="5" y="133" width="2" height="2" fill="#b4b4b4" />
<rect x="6" y="134" width="1" height="1" fill="#8c8c8c" />
<rect x="5" y="137" width="2" height="2" fill="#b4b4b4" />
<rect x="6" y="138" width="1" height="1" fill="#8c8c8c" />
<rect x="5" y="141" width="2" height="2" fill="#b4b4b4" />
<rect x="6" y="142" width="1" height="1" fill="#8c8c8c" />
<rect x="5" y="145" width="2" height="2" fill="#b4b4b4" />
<rect x="6" y="146" width="1" height="1" fill="#8c8c8c" />
<rect x="5" y="149" width="2" height="2" fill="#b4b4b4" />
<rect x="6" y="150" width="1" height="1" fill="#8c8c8c" />
<g transform="translate(14,125) scale(1)"><circle cx="12" cy="12" r="4" fill="#d40000" stroke="#7a0000" stroke-width="0.6"/></g>
<g transform="translate(45,125) scale(1)"><path d="M5,22 Q3,12 8,8 Q12,3 22,3" fill="none" stroke="#7a0000" stroke-width="3.4"/><path d="M5,22 Q3,12 8,8 Q12,3 22,3" fill="none" stroke="#d40000" stroke-width="2.2"/><circle cx="7" cy="7" r="4.4" fill="#d40000" stroke="#7a0000" stroke-width="0.6"/></g>
<g transform="translate(76,125) scale(1)"><rect x="9.5" y="1" width="5" height="22" fill="#d40000" stroke="#7a0000" stroke-width="0.6"/></g>
<g transform="translate(107,125) scale(1)"><rect x="1" y="9.5" width="22" height="5" fill="#d40000" stroke="#7a0000" stroke-width="0.6"/></g>
<g transform="translate(138,125) scale(1)"><path d="M1,17 L17,1 L20,4 L4,20Z M5,22 L21,6 L24,9 L8,25Z" fill="#d40000" stroke="#7a0000" stroke-width="0.6"/></g>
<g transform="translate(169,125) scale(1)"><path d="M9,1 H15 V16 H23 V22 H1 V16 H9Z" fill="#d40000" stroke="#7a0000" stroke-width="0.6"/></g>
<g transform="translate(200,125) scale(1)"><path d="M1,11 Q11,7 15,22" fill="none" stroke="#7a0000" stroke-width="3.4"/><path d="M1,11 Q11,7 15,22" fill="none" stroke="#d40000" stroke-width="2.2"/><path d="M8,1.5 L23,16 L20.5,19 L5.5,4.5Z" fill="#d40000" stroke="#7a0000" stroke-width="0.6"/></g>
<g transform="translate(231,125) scale(1)"><rect x="3.5" y="5" width="17" height="5" fill="#d40000" stroke="#7a0000" stroke-width="0.6"/><rect x="3.5" y="13.5" width="17" height="5" fill="#d40000" stroke="#7a0000" stroke-width="0.6"/></g>
<g transform="translate(262,125) scale(1)"><path d="M1,2 L9,10 L9,13 L1,21 L1,16 L6,11.5 L1,7Z M23,2 L15,10 L15,13 L23,21 L23,16 L18,11.5 L23,7Z" fill="#d40000" stroke="#7a0000" stroke-width="0.6"/></g>
<g transform="translate(293,125) scale(1)"><circle cx="11" cy="12" r="9.5" fill="#fff" stroke="#000" stroke-width="2.4"/><circle cx="11" cy="12" r="7" fill="none" stroke="#d00" stroke-width="2.2"/><path d="M6,7 L16,17" stroke="#d00" stroke-width="2.4"/></g>
<line x1="323.5" y1="124" x2="323.5" y2="150" stroke="#d4d4d4" stroke-width="1" />
<g transform="translate(331,125) scale(1)"><path d="M7,11 V6 Q7,1.5 11.5,1.5 Q16,1.5 16,6 V11" fill="none" stroke="#7a0000" stroke-width="3"/><path d="M7,11 V6 Q7,1.5 11.5,1.5 Q16,1.5 16,6 V11" fill="none" stroke="#d40000" stroke-width="1.8"/><rect x="3.5" y="10" width="16" height="12" rx="1" fill="#d40000" stroke="#7a0000" stroke-width="0.6"/><path d="M4,14 H19 M4,18 H19" stroke="#a00" stroke-width="0.6"/></g>
<g transform="translate(362,125) scale(1)"><path d="M1,6 H5 V10 H19 V6 H23 V19 H19 V15 H5 V19 H1Z" fill="#d40000" stroke="#7a0000" stroke-width="0.6"/></g>
<g transform="translate(393,125) scale(1)"><path d="M5,1 H19 V5 H14.5 V19 H19 V23 H5 V19 H9.5 V5 H5Z" fill="#d40000" stroke="#7a0000" stroke-width="0.6"/></g>
<g transform="translate(424,125) scale(1)"><path d="M2,22 L5,13 L7.5,15.5 L15.5,7.5 L13,5 L22,2 L19,11 L16.5,8.5 L8.5,16.5 L11,19Z" fill="#d40000" stroke="#7a0000" stroke-width="0.6"/></g>
<g transform="translate(455,125) scale(1)"><circle cx="12" cy="12" r="9.5" fill="none" stroke="#7a0000" stroke-width="3.2"/><circle cx="12" cy="12" r="9.5" fill="none" stroke="#d40000" stroke-width="2"/><path d="M12,12 L18,6" stroke="#d40000" stroke-width="2.6"/></g>
<path d="M484,135 h7 l-3.5,4 z" fill="#202020"/>
<g transform="translate(498,125) scale(1)"><path d="M22,3 L1,13 L22,22" fill="none" stroke="#7a0000" stroke-width="3.6"/><path d="M22,3 L1,13 L22,22" fill="none" stroke="#d40000" stroke-width="2.4"/><path d="M11,9 Q15,13 11,18" fill="none" stroke="#d40000" stroke-width="2.4"/></g>
<g transform="translate(528,125) scale(1)"><path d="M3,12 H23" stroke="#999" stroke-width="2.6"/><path d="M6,2 L16,22" stroke="#c8c8c8" stroke-width="3"/><path d="M6,2 L16,22" stroke="#aaa" stroke-width="0.8"/></g>
<line x1="558.5" y1="124" x2="558.5" y2="150" stroke="#d4d4d4" stroke-width="1" />
<g transform="translate(565,125) scale(1)"><rect x="9" y="2" width="12" height="12" fill="none" stroke="#1a3a70" stroke-width="2.6"/><rect x="9" y="2" width="12" height="12" fill="none" stroke="#4a88d8" stroke-width="1.2"/><rect x="2" y="10" width="12" height="12" fill="none" stroke="#6a0000" stroke-width="3"/><rect x="2" y="10" width="12" height="12" fill="none" stroke="#d00" stroke-width="1.8"/></g>
<rect x="2.5" y="155.5" width="266" height="18" fill="#d9d9d9" stroke="#c8c8c8" stroke-width="1" />
<text x="3" y="169" font-family="'Liberation Sans', sans-serif" font-size="12" fill="#000" font-weight="normal" text-anchor="start" textLength="58" lengthAdjust="spacingAndGlyphs" >Combo View</text>
<g transform="translate(255,160)"><rect x="2.5" y="0.5" width="6" height="5" fill="none" stroke="#000" stroke-width="1.3"/><rect x="0.5" y="3.5" width="6" height="5" fill="#d9d9d9" stroke="#000" stroke-width="1.3"/></g>
<rect x="54.5" y="178.5" width="66" height="22" fill="#f0f0f0" stroke="#d9d9d9" stroke-width="1" />
<rect x="2" y="176.5" width="52" height="25" fill="#ffffff" />
<line x1="2" y1="176.5" x2="54" y2="176.5" stroke="#d9d9d9" stroke-width="1" />
<line x1="54.5" y1="176.5" x2="54.5" y2="201" stroke="#d9d9d9" stroke-width="1" />
<text x="12" y="192" font-family="'Liberation Sans', sans-serif" font-size="12" fill="#000" font-weight="normal" text-anchor="start" textLength="28" lengthAdjust="spacingAndGlyphs" >Model</text>
<g transform="translate(65,180) scale(1)"><path d="M1,2 L3,0 L14,11 L16,16 L11,14Z" fill="#2a5a9a" stroke="#0f2f5f" stroke-width="0.6"/><path d="M12,13 L16,16 L13,12Z" fill="#fff"/></g>
<text x="84.5" y="193" font-family="'Liberation Sans', sans-serif" font-size="12" fill="#000" font-weight="normal" text-anchor="start" textLength="26" lengthAdjust="spacingAndGlyphs" >Tasks</text>
<rect x="3.5" y="201.5" width="261" height="256" fill="#ffffff" stroke="#828790" stroke-width="1" />
<text x="8.5" y="218" font-family="'Liberation Sans', sans-serif" font-size="12" fill="#000" font-weight="normal" text-anchor="start" textLength="100" lengthAdjust="spacingAndGlyphs" >Labels &amp; Attributes</text>
<defs><clipPath id="treeclip"><rect x="4" y="202" width="243" height="238"/></clipPath><clipPath id="rclip"><rect x="1380" y="150" width="64" height="600"/></clipPath><clipPath id="vclip"><rect x="273" y="154" width="1107" height="575"/></clipPath></defs>
<g clip-path="url(#treeclip)">
<g transform="translate(67,227)"><path d="M1,4 L7,1 L15,2 L15,13 L9,16 L1,14Z" fill="#3a6ab0"/><path d="M1,4 L9,5 L9,16 L1,14Z" fill="#4a7cc4"/><path d="M9,5 L15,2 V13 L9,16Z" fill="#22508e"/><path d="M1,4 L7,1 L15,2 L9,5Z" fill="#7aa6e0"/></g>
<text x="89.5" y="239" font-family="'Liberation Sans', sans-serif" font-size="12" fill="#000" font-weight="normal" text-anchor="start" textLength="117" lengthAdjust="spacingAndGlyphs" >User Library-led_0402_</text>
<g transform="translate(67,245)"><path d="M1,4 L7,1 L15,2 L15,13 L9,16 L1,14Z" fill="#3a6ab0"/><path d="M1,4 L9,5 L9,16 L1,14Z" fill="#4a7cc4"/><path d="M9,5 L15,2 V13 L9,16Z" fill="#22508e"/><path d="M1,4 L7,1 L15,2 L9,5Z" fill="#7aa6e0"/></g>
<text x="89.5" y="257" font-family="'Liberation Sans', sans-serif" font-size="12" fill="#000" font-weight="normal" text-anchor="start" textLength="105" lengthAdjust="spacingAndGlyphs" >C_0402_1005Metric_</text>
<g transform="translate(67,263)"><path d="M1,4 L7,1 L15,2 L15,13 L9,16 L1,14Z" fill="#3a6ab0"/><path d="M1,4 L9,5 L9,16 L1,14Z" fill="#4a7cc4"/><path d="M9,5 L15,2 V13 L9,16Z" fill="#22508e"/><path d="M1,4 L7,1 L15,2 L9,5Z" fill="#7aa6e0"/></g>
<text x="89.5" y="275" font-family="'Liberation Sans', sans-serif" font-size="12" fill="#000" font-weight="normal" text-anchor="start" textLength="122" lengthAdjust="spacingAndGlyphs" >C_0402_1005Metric_001</text>
<g transform="translate(67,281)"><path d="M1,4 L7,1 L15,2 L15,13 L9,16 L1,14Z" fill="#3a6ab0"/><path d="M1,4 L9,5 L9,16 L1,14Z" fill="#4a7cc4"/><path d="M9,5 L15,2 V13 L9,16Z" fill="#22508e"/><path d="M1,4 L7,1 L15,2 L9,5Z" fill="#7aa6e0"/></g>
<text x="89.5" y="293" font-family="'Liberation Sans', sans-serif" font-size="12" fill="#000" font-weight="normal" text-anchor="start" textLength="122" lengthAdjust="spacingAndGlyphs" >C_0402_1005Metric_002</text>
<g transform="translate(67,299)"><path d="M1,4 L7,1 L15,2 L15,13 L9,16 L1,14Z" fill="#3a6ab0"/><path d="M1,4 L9,5 L9,16 L1,14Z" fill="#4a7cc4"/><path d="M9,5 L15,2 V13 L9,16Z" fill="#22508e"/><path d="M1,4 L7,1 L15,2 L9,5Z" fill="#7aa6e0"/></g>
<text x="89.5" y="311" font-family="'Liberation Sans', sans-serif" font-size="12" fill="#000" font-weight="normal" text-anchor="start" textLength="134" lengthAdjust="spacingAndGlyphs" >User Library-led_0402_001</text>
<g transform="translate(67,317)"><path d="M1,4 L7,1 L15,2 L15,13 L9,16 L1,14Z" fill="#3a6ab0"/><path d="M1,4 L9,5 L9,16 L1,14Z" fill="#4a7cc4"/><path d="M9,5 L15,2 V13 L9,16Z" fill="#22508e"/><path d="M1,4 L7,1 L15,2 L9,5Z" fill="#7aa6e0"/></g>
<text x="89.5" y="329" font-family="'Liberation Sans', sans-serif" font-size="12" fill="#000" font-weight="normal" text-anchor="start" textLength="122" lengthAdjust="spacingAndGlyphs" >R_0402_1005Metric_001</text>
<g transform="translate(67,335)"><path d="M1,4 L7,1 L15,2 L15,13 L9,16 L1,14Z" fill="#3a6ab0"/><path d="M1,4 L9,5 L9,16 L1,14Z" fill="#4a7cc4"/><path d="M9,5 L15,2 V13 L9,16Z" fill="#22508e"/><path d="M1,4 L7,1 L15,2 L9,5Z" fill="#7aa6e0"/></g>
<text x="89.5" y="347" font-family="'Liberation Sans', sans-serif" font-size="12" fill="#000" font-weight="normal" text-anchor="start" textLength="122" lengthAdjust="spacingAndGlyphs" >R_0402_1005Metric_002</text>
<g transform="translate(67,353)"><path d="M1,4 L7,1 L15,2 L15,13 L9,16 L1,14Z" fill="#3a6ab0"/><path d="M1,4 L9,5 L9,16 L1,14Z" fill="#4a7cc4"/><path d="M9,5 L15,2 V13 L9,16Z" fill="#22508e"/><path d="M1,4 L7,1 L15,2 L9,5Z" fill="#7aa6e0"/></g>
<text x="89.5" y="365" font-family="'Liberation Sans', sans-serif" font-size="12" fill="#000" font-weight="normal" text-anchor="start" textLength="122" lengthAdjust="spacingAndGlyphs" >R_0402_1005Metric_003</text>
<g transform="translate(67,371)"><path d="M1,4 L7,1 L15,2 L15,13 L9,16 L1,14Z" fill="#3a6ab0"/><path d="M1,4 L9,5 L9,16 L1,14Z" fill="#4a7cc4"/><path d="M9,5 L15,2 V13 L9,16Z" fill="#22508e"/><path d="M1,4 L7,1 L15,2 L9,5Z" fill="#7aa6e0"/></g>
<text transform="translate(89.5,383) scale(0.9,1)" x="0" y="0" font-family="'Liberation Sans', sans-serif" font-size="12" fill="#000" font-weight="normal" text-anchor="start" >QFN-24-1EP_5x5mm_Pitch0.65mm</text>
<rect x="44.5" y="387.5" width="204" height="18" fill="#cce8ff" stroke="#1a1a1a" stroke-width="1" stroke-dasharray="1,1"/>
<g opacity="0.6" style="filter:saturate(0.4)">
<g transform="translate(47,389)"><path d="M1,4 L7,1 L15,2 L15,13 L9,16 L1,14Z" fill="#3a6ab0"/><path d="M1,4 L9,5 L9,16 L1,14Z" fill="#4a7cc4"/><path d="M9,5 L15,2 V13 L9,16Z" fill="#22508e"/><path d="M1,4 L7,1 L15,2 L9,5Z" fill="#7aa6e0"/></g>
</g>
<text transform="translate(69,401) scale(0.9,1)" x="0" y="0" font-family="'Liberation Sans', sans-serif" font-size="12" fill="#8a8c90" font-weight="normal" text-anchor="start" >USB_2_0_type_A_Dual_Stacked_jack_PCB</text>
<g transform="translate(47,406)"><path d="M1,4 L4,1 L15,12 L12,15Z" fill="#3ec8d8" stroke="#1a7a88" stroke-width="0.8"/><path d="M5,5 L6.5,3.5 M8,8 L9.5,6.5 M11,11 L12.5,9.5" stroke="#1a7a88" stroke-width="0.8"/></g>
<text x="69" y="419" font-family="'Liberation Sans', sans-serif" font-size="12" fill="#000" font-weight="normal" text-anchor="start" textLength="120" lengthAdjust="spacingAndGlyphs" >Distance: 0.399469 mm</text>
<g transform="translate(47,424)"><path d="M1,4 L4,1 L15,12 L12,15Z" fill="#3ec8d8" stroke="#1a7a88" stroke-width="0.8"/><path d="M5,5 L6.5,3.5 M8,8 L9.5,6.5 M11,11 L12.5,9.5" stroke="#1a7a88" stroke-width="0.8"/></g>
<text x="69" y="437" font-family="'Liberation Sans', sans-serif" font-size="12" fill="#000" font-weight="normal" text-anchor="start" textLength="120" lengthAdjust="spacingAndGlyphs" >Distance: 0.399918 mm</text>
</g>
<rect x="247" y="202" width="17" height="239" fill="#f0f0f0" />
<rect x="249" y="254" width="14" height="54" fill="#cdcdcd" />
<path d="M252,214 L256,210 L260,214" fill="none" stroke="#606060" stroke-width="1.3"/>
<path d="M252,430 L256,434 L260,430" fill="none" stroke="#606060" stroke-width="1.3"/>
<rect x="4" y="441" width="243" height="16" fill="#f0f0f0" />
<rect x="247" y="441" width="17" height="16" fill="#f0f0f0" />
<rect x="21" y="441" width="181" height="15" fill="#cdcdcd" />
<path d="M14,444 L10,448 L14,452" fill="none" stroke="#606060" stroke-width="1.3"/>
<path d="M236,444 L240,448 L236,452" fill="none" stroke="#606060" stroke-width="1.3"/>
<rect x="5.5" y="465.5" width="255" height="265" fill="#ffffff" stroke="#828790" stroke-width="1" />
<rect x="6" y="466" width="254" height="23" fill="#ffffff" />
<line x1="6" y1="488.5" x2="260" y2="488.5" stroke="#e5e5e5" stroke-width="1" />
<line x1="105.5" y1="465" x2="105.5" y2="549" stroke="#e5e5e5" stroke-width="1" />
<text x="10" y="482" font-family="'Liberation Sans', sans-serif" font-size="12" fill="#000" font-weight="normal" text-anchor="start" textLength="45" lengthAdjust="spacingAndGlyphs" >Property</text>
<text x="109.5" y="482" font-family="'Liberation Sans', sans-serif" font-size="12" fill="#000" font-weight="normal" text-anchor="start" textLength="29.5" lengthAdjust="spacingAndGlyphs" >Value</text>
<rect x="6" y="489" width="254" height="19" fill="#a0a0a0" />
<text x="29.5" y="504" font-family="'Liberation Sans', sans-serif" font-size="12" fill="#ffffff" font-weight="bold" text-anchor="start" textLength="25.5" lengthAdjust="spacingAndGlyphs" >Base</text>
<rect x="6" y="508" width="20" height="21" fill="#f0f0f0" />
<path d="M14,515 L18,519 L14,523" fill="none" stroke="#808080" stroke-width="1.2"/>
<text x="29.5" y="524" font-family="'Liberation Sans', sans-serif" font-size="12" fill="#000" font-weight="normal" text-anchor="start" textLength="55.5" lengthAdjust="spacingAndGlyphs" >Placement</text>
<text x="109.5" y="524" font-family="'Liberation Sans', sans-serif" font-size="12" fill="#000" font-weight="normal" text-anchor="start" textLength="145" lengthAdjust="spacingAndGlyphs" >[(0.00 0.00 1.00); 0.00 °; (-1...</text>
<line x1="26" y1="528.5" x2="260" y2="528.5" stroke="#e5e5e5" stroke-width="1" />
<text x="29.5" y="544" font-family="'Liberation Sans', sans-serif" font-size="12" fill="#000" font-weight="normal" text-anchor="start" textLength="27" lengthAdjust="spacingAndGlyphs" >Label</text>
<text x="109.5" y="544" font-family="'Liberation Sans', sans-serif" font-size="12" fill="#000" font-weight="normal" text-anchor="start" textLength="142.5" lengthAdjust="spacingAndGlyphs" >USB_2_0_type_A_Dual_Sta...</text>
<line x1="26" y1="548.5" x2="260" y2="548.5" stroke="#e5e5e5" stroke-width="1" />
<line x1="95" y1="733.5" x2="266" y2="733.5" stroke="#e0e0e0" stroke-width="1" />
<path d="M3.5,732.5 Q5.5,740 8,744 Q10,747 14,747 H37 Q41,747 43,743.5 L47.5,732.5" fill="#f0f0f0" stroke="#1a1a1a" stroke-width="1"/>
<path d="M48.5,732.5 L53.5,744 Q55.5,747.5 59,747.5 H84 Q88,747.5 90,744 L95.5,732.5" fill="#ffffff" stroke="#1a1a1a" stroke-width="1"/>
<text x="15" y="745" font-family="'Liberation Sans', sans-serif" font-size="12" fill="#000" font-weight="normal" text-anchor="start" textLength="21.4" lengthAdjust="spacingAndGlyphs" >View</text>
<text x="60" y="746" font-family="'Liberation Sans', sans-serif" font-size="12" fill="#000" font-weight="normal" text-anchor="start" textLength="23.5" lengthAdjust="spacingAndGlyphs" >Data</text>
<line x1="0" y1="750.5" x2="270" y2="750.5" stroke="#dcdcdc" stroke-width="1" />
<line x1="266.5" y1="201" x2="266.5" y2="733" stroke="#dcdcdc" stroke-width="1" />
<defs><linearGradient id="bg3d" x1="0" y1="0" x2="0" y2="1"><stop offset="0" stop-color="#333363"/><stop offset="1" stop-color="#9696a8"/></linearGradient></defs>
<rect x="273" y="154" width="1107" height="575" fill="url(#bg3d)" />
<g clip-path="url(#vclip)">
<line x1="410.5" y1="154" x2="410.5" y2="729" stroke="#3a92f6" stroke-width="2" />
<line x1="410.5" y1="154" x2="410.5" y2="729" stroke="#b4b0a8" stroke-width="1" stroke-dasharray="4,4" stroke-dashoffset="2"/>
<line x1="1254.5" y1="154" x2="1254.5" y2="729" stroke="#3a92f6" stroke-width="2" />
<line x1="1254.5" y1="154" x2="1254.5" y2="729" stroke="#b4b0a8" stroke-width="1" stroke-dasharray="4,4" stroke-dashoffset="2"/>
<line x1="273" y1="436.8" x2="410" y2="436.8" stroke="#c4b4ae" stroke-width="2" />
<line x1="273" y1="436.8" x2="410" y2="436.8" stroke="#d85a52" stroke-width="2" stroke-dasharray="4,4"/>
<line x1="1254" y1="436.8" x2="1380" y2="436.8" stroke="#c4b4ae" stroke-width="2" />
<line x1="1254" y1="436.8" x2="1380" y2="436.8" stroke="#d85a52" stroke-width="2" stroke-dasharray="4,4"/>
<path d="M579,238.5 H1084 A22,22 0 0 1 1106.5,260.5 V612 A22,22 0 0 1 1084.5,634.5 H690 A34,34 0 0 0 622,634.5 H578 A944,944 0 0 1 579,238.5 Z M598,383.5 H622 Q637,383.5 637,398.5 A37,37 0 0 1 637,472.5 Q637,489.5 620,489.5 H598 Q583,489.5 583,474.5 V398.5 Q583,383.5 598,383.5 Z" fill="#0b52ff" fill-rule="evenodd" stroke="#111" stroke-width="2"/>
<rect x="723.5" y="329.5" width="211" height="211" fill="#2e2e2e" stroke="#111" stroke-width="1.2" />
<circle cx="748" cy="354" r="10" fill="#bfb6a2" stroke="#8a8270" stroke-width="0.6"/>
<g transform="translate(642.5,275.5)"><rect x="0.5" y="0.5" width="43" height="21" fill="#1a1a1a" stroke="#000"/><rect x="6" y="2.5" width="32" height="17" fill="#10c010"/><path d="M1.5,2 H4.5 V8 L1.5,9Z M1.5,13 L4.5,14 V20 H1.5Z M42.5,2 H39.5 V8 L42.5,9Z M42.5,13 L39.5,14 V20 H42.5Z" fill="#f0e890"/></g>
<g transform="translate(642.5,562.5)"><rect x="0.5" y="0.5" width="43" height="21" fill="#1a1a1a" stroke="#000"/><rect x="6" y="2.5" width="32" height="17" fill="#10c010"/><path d="M1.5,2 H4.5 V8 L1.5,9Z M1.5,13 L4.5,14 V20 H1.5Z M42.5,2 H39.5 V8 L42.5,9Z M42.5,13 L39.5,14 V20 H42.5Z" fill="#f0e890"/></g>
<g transform="translate(642.5,330)"><rect x="0.5" y="0.5" width="43" height="22" rx="1" fill="#161616" stroke="#000"/><rect x="2.5" y="2.5" width="5" height="18" fill="#dcd8cc"/><rect x="36.5" y="2.5" width="5" height="18" fill="#dcd8cc"/><rect x="8.5" y="3.5" width="27" height="16" fill="#222"/></g>
<g transform="translate(642.5,507.5)"><rect x="0.5" y="0.5" width="43" height="22" rx="1" fill="#161616" stroke="#000"/><rect x="2.5" y="2.5" width="5" height="18" fill="#dcd8cc"/><rect x="36.5" y="2.5" width="5" height="18" fill="#dcd8cc"/><rect x="8.5" y="3.5" width="27" height="16" fill="#222"/></g>
<g transform="translate(979,320)"><rect x="0.5" y="0.5" width="43" height="22" rx="1" fill="#161616" stroke="#000"/><rect x="2.5" y="2.5" width="5" height="18" fill="#dcd8cc"/><rect x="36.5" y="2.5" width="5" height="18" fill="#dcd8cc"/><rect x="8.5" y="3.5" width="27" height="16" fill="#222"/></g>
<g transform="translate(979,375)"><rect x="0.5" y="0.5" width="43" height="22" rx="1" fill="#161616" stroke="#000"/><rect x="2.5" y="2.5" width="5" height="18" fill="#dcd8cc"/><rect x="36.5" y="2.5" width="5" height="18" fill="#dcd8cc"/><rect x="8.5" y="3.5" width="27" height="16" fill="#222"/></g>
<g transform="translate(986.5,428)"><rect x="0.5" y="0.5" width="43" height="22" rx="1" fill="#161616" stroke="#000"/><rect x="2.5" y="2.5" width="8" height="18" fill="#dcd8cc"/><rect x="33.5" y="2.5" width="8" height="18" fill="#dcd8cc"/><rect x="11.5" y="3.5" width="21" height="16" fill="#6e5444"/></g>
<g transform="translate(986.5,478.5)"><rect x="0.5" y="0.5" width="43" height="22" rx="1" fill="#161616" stroke="#000"/><rect x="2.5" y="2.5" width="8" height="18" fill="#dcd8cc"/><rect x="33.5" y="2.5" width="8" height="18" fill="#dcd8cc"/><rect x="11.5" y="3.5" width="21" height="16" fill="#6e5444"/></g>
<g transform="translate(986.5,529)"><rect x="0.5" y="0.5" width="43" height="22" rx="1" fill="#161616" stroke="#000"/><rect x="2.5" y="2.5" width="8" height="18" fill="#dcd8cc"/><rect x="33.5" y="2.5" width="8" height="18" fill="#dcd8cc"/><rect x="11.5" y="3.5" width="21" height="16" fill="#6e5444"/></g>
<line x1="832.5" y1="154" x2="832.5" y2="729" stroke="#3c96f8" stroke-width="2" />
<line x1="410" y1="436.8" x2="1254" y2="436.8" stroke="#3c96f8" stroke-width="2" />
<line x1="842" y1="436.8" x2="1135" y2="436.8" stroke="#ff2010" stroke-width="2" stroke-dasharray="7,9"/>
<line x1="832.5" y1="288" x2="832.5" y2="436" stroke="#ff2010" stroke-width="2" stroke-dasharray="7,8"/>
<path d="M941.5,276.3 H1068.5 V592.5 H941.5Z" fill="none" stroke="#18f018" stroke-width="2.6"/>
<rect x="938.0" y="272.8" width="7" height="7" rx="2.5" fill="#18f018"/>
<rect x="1065.0" y="272.8" width="7" height="7" rx="2.5" fill="#18f018"/>
<rect x="938.0" y="589.0" width="7" height="7" rx="2.5" fill="#18f018"/>
<rect x="1065.0" y="589.0" width="7" height="7" rx="2.5" fill="#18f018"/>
<line x1="941.5" y1="220" x2="941.5" y2="276" stroke="#ff2a14" stroke-width="1.6" />
<line x1="1068.5" y1="220" x2="1068.5" y2="340" stroke="#ff9a10" stroke-width="2.6" />
<line x1="1068.5" y1="220" x2="1068.5" y2="340" stroke="#ff2a14" stroke-width="1.4" />
<line x1="952" y1="246.5" x2="968" y2="246.5" stroke="#ff2a14" stroke-width="1.6" />
<line x1="1042" y1="246.5" x2="1056" y2="246.5" stroke="#ff2a14" stroke-width="1.6" />
<path d="M941.5,246.5 L954,240 V253Z M1068.5,246.5 L1056,240 V253Z" fill="#ff2a14"/>
<text x="979" y="254.5" font-family="'Liberation Sans', sans-serif" font-size="23" fill="#ff2a14" font-weight="normal" text-anchor="start" textLength="53" lengthAdjust="spacingAndGlyphs" stroke="#c01a10" stroke-width="0.5">3 mm</text>
<line x1="997" y1="262.5" x2="1013" y2="262.5" stroke="#ff2a14" stroke-width="1.6" />
<line x1="842" y1="314.5" x2="902" y2="314.5" stroke="#ff2a14" stroke-width="1.6" />
<line x1="998" y1="314.5" x2="1058" y2="314.5" stroke="#ff2a14" stroke-width="1.6" />
<path d="M832.5,314.5 L844,308.5 V320.5Z M1068.5,314.5 L1057,308.5 V320.5Z" fill="#ff2a14"/>
<text x="910.5" y="322" font-family="'Liberation Sans', sans-serif" font-size="23" fill="#ff2a14" font-weight="normal" text-anchor="start" textLength="80" lengthAdjust="spacingAndGlyphs" stroke="#c01a10" stroke-width="0.5">-5.6 mm</text>
<line x1="1068" y1="276.3" x2="1133" y2="276.3" stroke="#ff2a14" stroke-width="1.6" />
<line x1="1068" y1="592.5" x2="1124" y2="592.5" stroke="#ff2a14" stroke-width="1.6" />
<line x1="1098.4" y1="286" x2="1098.4" y2="393" stroke="#ff2a14" stroke-width="1.6" />
<line x1="1106.4" y1="286" x2="1106.4" y2="313" stroke="#ff2a14" stroke-width="1.6" />
<path d="M1098.4,276.5 L1093,287.3 H1103.8Z M1106.4,276.5 L1101,287.3 H1111.8Z" fill="#ff2a14"/>
<text x="0" y="0" font-family="'Liberation Sans', sans-serif" font-size="23" fill="#ff2a14" font-weight="normal" text-anchor="start" textLength="72" lengthAdjust="spacingAndGlyphs" stroke="#c01a10" stroke-width="0.5" transform="translate(1098,320.5) rotate(90)">3.8 mm</text>
<text x="0" y="0" font-family="'Liberation Sans', sans-serif" font-size="23" fill="#ff2a14" font-weight="normal" text-anchor="start" textLength="70" lengthAdjust="spacingAndGlyphs" stroke="#c01a10" stroke-width="0.5" transform="translate(1090,401) rotate(90)">7.5 mm</text>
<line x1="1098.4" y1="478" x2="1098.4" y2="582" stroke="#ff2a14" stroke-width="1.6" />
<path d="M1098.4,592.5 L1092.5,580 H1104.5Z M1106.4,436.5 L1100.5,424 H1112.5Z" fill="#ff2a14"/>
<line x1="1106.4" y1="400" x2="1106.4" y2="425" stroke="#ff2a14" stroke-width="1.6" />
<line x1="1081.5" y1="428" x2="1081.5" y2="443" stroke="#ff2a14" stroke-width="1.6" />
<line x1="1074" y1="436.8" x2="1089" y2="436.8" stroke="#ff2a14" stroke-width="1.2" />
<line x1="998" y1="607.5" x2="1012" y2="607.5" stroke="#ff2a14" stroke-width="1.6" />
<text x="0" y="0" font-family="'Liberation Serif', serif" font-size="46" fill="#0a0a0a" font-weight="normal" text-anchor="start" textLength="136" lengthAdjust="spacingAndGlyphs" transform="translate(1244.5,422) scale(-1,1)">X_Axis</text>
<text x="1107.5" y="188" font-family="'Liberation Serif', serif" font-size="17.5" fill="#ffffff" font-weight="normal" text-anchor="start" textLength="63.5" lengthAdjust="spacingAndGlyphs" stroke="#ffffff" stroke-width="0.5">0.40 mm</text>
<path d="M1102,175 L1111,184 M1111,175 L1102,184 M1102,192 L1111,201 M1111,192 L1102,201" stroke="#ffffff" stroke-width="1"/>
<path d="M1106.5,177 V196" stroke="#ffffff" stroke-width="2.4"/>
<text x="1107.5" y="686" font-family="'Liberation Serif', serif" font-size="17.5" fill="#ffffff" font-weight="normal" text-anchor="start" textLength="63.5" lengthAdjust="spacingAndGlyphs" stroke="#ffffff" stroke-width="0.5">0.40 mm</text>
<path d="M1102,673 L1111,682 M1111,673 L1102,682 M1102,690 L1111,699 M1111,690 L1102,699" stroke="#ffffff" stroke-width="1"/>
<path d="M1106.5,675 V694" stroke="#ffffff" stroke-width="2.4"/>
<defs><filter id="nblur" x="-10%" y="-10%" width="120%" height="120%"><feGaussianBlur stdDeviation="0.6"/></filter></defs>
<path d="M1274,199 H1320 Q1334,199 1334,213 V260 Q1334,274 1320,274 H1274 Q1259.5,274 1259.5,260 V213 Q1259.5,199 1274,199Z" fill="#dfe4ec" filter="url(#nblur)"/>
<path d="M1268,208 H1325.5 V266 H1268Z" fill="#f3f5f9"/>
<path d="M1277,212 H1317 L1322,217 V257 L1317,262 H1277 L1272.5,257 V217Z" fill="#f8f9fc" stroke="#cdd0dc" stroke-width="0.8"/>
<path d="M1262,205 L1272,212 M1332,205 L1322,212 M1262,268 L1272,262 M1332,268 L1322,262" stroke="#b8bccc" stroke-width="1"/>
<path d="M1323,262 L1334,274" stroke="#4060e0" stroke-width="0.8"/>
<text x="0" y="0" font-family="'Liberation Sans', sans-serif" font-size="19" fill="#1e1e1e" font-weight="normal" text-anchor="start" textLength="57" lengthAdjust="spacingAndGlyphs" transform="translate(1325,230) rotate(180)">Bottom</text>
<line x1="1259" y1="274.4" x2="1334" y2="274.4" stroke="#e02838" stroke-width="1.4" />
<line x1="1334.8" y1="199" x2="1334.8" y2="274.4" stroke="#18e030" stroke-width="1.4" />
<path d="M1256,271 L1262,279 M1262,271 L1256,279" stroke="#e02030" stroke-width="1.2"/>
<path d="M1288,171 L1297,162 L1306,171Z M1288,302 L1297,311 L1306,302Z M1231,228 L1222,237 L1231,246Z M1363,228 L1372,237 L1363,246Z" fill="#dfe3ec"/>
<path d="M1276,172 Q1258,177 1249,188" fill="none" stroke="#dfe3ec" stroke-width="4"/><path d="M1243,195 L1244,183 L1254,189Z" fill="#dfe3ec"/>
<path d="M1318,172 Q1336,177 1345,188" fill="none" stroke="#dfe3ec" stroke-width="4"/><path d="M1351,195 L1350,183 L1340,189Z" fill="#dfe3ec"/>
<path d="M1324,288 L1334,284 L1345,288 V302 L1334,306 L1324,302Z" fill="#e8e8e8"/><path d="M1334,292 L1345,288 V302 L1334,306Z" fill="#bcbcbc"/><path d="M1324,288 L1334,284 L1345,288 L1334,292Z" fill="#fafafa"/>
<path d="M1350,292 H1364 L1357,299Z" fill="#3a3a4a"/>
<line x1="1335" y1="699.5" x2="1352" y2="699.5" stroke="#a02020" stroke-width="1.8" />
<line x1="1352" y1="699.5" x2="1352" y2="683" stroke="#30a030" stroke-width="1.8" />
<path d="M1352,679 L1349,685 H1355Z" fill="#30a030"/>
<text x="1333" y="698" font-family="'Liberation Sans', sans-serif" font-size="10" fill="#111" font-weight="normal" text-anchor="start" >X</text>
<text x="1355" y="680" font-family="'Liberation Sans', sans-serif" font-size="10" fill="#111" font-weight="normal" text-anchor="start" >Y</text>
<text x="1354" y="698" font-family="'Liberation Sans', sans-serif" font-size="10" fill="#111" font-weight="normal" text-anchor="start" >Z</text>
</g>
<g clip-path="url(#rclip)">
<rect x="1384.5" y="155.5" width="62" height="18" fill="#d9d9d9" stroke="#c8c8c8" stroke-width="1" />
<text x="1385.5" y="169" font-family="'Liberation Sans', sans-serif" font-size="12" fill="#000" font-weight="normal" text-anchor="start" textLength="36" lengthAdjust="spacingAndGlyphs" >kicad ...</text>
<g transform="translate(1431,160)"><rect x="2.5" y="0.5" width="6" height="5" fill="none" stroke="#000" stroke-width="1.3"/><rect x="0.5" y="3.5" width="6" height="5" fill="#d9d9d9" stroke="#000" stroke-width="1.3"/></g>
<rect x="1392.5" y="181.5" width="25" height="25" fill="#e1e1e1" stroke="#adadad" stroke-width="1" />
<path d="M1398,194 L1411,187.5 V200.5Z" fill="#7a7a7a"/>
<rect x="1424.5" y="181.5" width="25" height="25" fill="#e1e1e1" stroke="#adadad" stroke-width="1" />
<rect x="1428" y="185" width="14" height="14" fill="#f0f0ea" stroke="#ccc"/><path d="M1430,199 H1446 V203 H1430Z" fill="#555"/>
<rect x="1388.5" y="220.5" width="70" height="19" fill="#ffffff" stroke="#7a7a7a" stroke-width="1" />
<text x="1444" y="235" font-family="'Liberation Sans', sans-serif" font-size="12" fill="#000" font-weight="normal" text-anchor="end" >90</text>
<rect x="1388.5" y="261.5" width="70" height="19" fill="#ffffff" stroke="#7a7a7a" stroke-width="1" />
<text x="1444" y="276" font-family="'Liberation Sans', sans-serif" font-size="12" fill="#000" font-weight="normal" text-anchor="end" >90</text>
<rect x="1388.5" y="301.5" width="70" height="19" fill="#ffffff" stroke="#7a7a7a" stroke-width="1" />
<text x="1444" y="316" font-family="'Liberation Sans', sans-serif" font-size="12" fill="#000" font-weight="normal" text-anchor="end" >90</text>
<rect x="1388.5" y="341.5" width="70" height="19" fill="#ffffff" stroke="#7a7a7a" stroke-width="1" />
<text x="1444" y="356" font-family="'Liberation Sans', sans-serif" font-size="12" fill="#000" font-weight="normal" text-anchor="end" >0.10</text>
<rect x="1388.5" y="381.5" width="70" height="19" fill="#ffffff" stroke="#7a7a7a" stroke-width="1" />
<text x="1444" y="396" font-family="'Liberation Sans', sans-serif" font-size="12" fill="#000" font-weight="normal" text-anchor="end" >0.10</text>
<rect x="1388.5" y="422.5" width="70" height="19" fill="#ffffff" stroke="#7a7a7a" stroke-width="1" />
<text x="1444" y="437" font-family="'Liberation Sans', sans-serif" font-size="12" fill="#000" font-weight="normal" text-anchor="end" >0.10</text>
<rect x="1389.5" y="457.5" width="60" height="34" fill="#e1e1e1" stroke="#adadad" stroke-width="1" />
<rect x="1389.5" y="496.5" width="60" height="34" fill="#e1e1e1" stroke="#adadad" stroke-width="1" />
<rect x="1389.5" y="534.5" width="60" height="34" fill="#e1e1e1" stroke="#adadad" stroke-width="1" />
<rect x="1389.5" y="573.5" width="60" height="34" fill="#e1e1e1" stroke="#adadad" stroke-width="1" />
<rect x="1389.5" y="611.5" width="60" height="34" fill="#e1e1e1" stroke="#adadad" stroke-width="1" />
<g transform="translate(1404,459) scale(1)"><rect x="3" y="9" width="22" height="15" rx="1" fill="#fff" stroke="#444" stroke-width="0.9"/><rect x="17" y="5" width="4" height="5" fill="#22c022" stroke="#0a600a" stroke-width="0.5"/><rect x="5" y="23" width="4" height="5" fill="#22c022" stroke="#0a600a" stroke-width="0.5"/><rect x="12" y="23" width="4" height="5" fill="#22c022" stroke="#0a600a" stroke-width="0.5"/><rect x="19" y="23" width="4" height="5" fill="#22c022" stroke="#0a600a" stroke-width="0.5"/><path d="M2,6 Q10,-1 17,7 L19,4 L20,14 L12,12 L15,10 Q10,5 5,9Z" fill="#50c028" stroke="#2a7010" stroke-width="0.7"/></g>
<g transform="translate(1404,498) scale(1)"><rect x="1" y="6" width="24" height="17" fill="#2a2a2a"/><rect x="3" y="2" width="4" height="5" rx="1" fill="#888"/><rect x="10" y="2" width="4" height="5" rx="1" fill="#888"/><rect x="17" y="2" width="4" height="5" rx="1" fill="#888"/><path d="M15,10 L22,8 L27,10 V20 L20,22 L15,20Z" fill="#3a7ad0" stroke="#1a3a80" stroke-width="0.6"/><path d="M5,19 Q15,14 22,24 L24,21 L25,29 L17,27 L20,25 Q14,20 8,23Z" fill="#50c028" stroke="#2a7010" stroke-width="0.7"/></g>
<g transform="translate(1401,534) scale(1)"><path d="M1,17 L18,9 L33,15 V24 L16,33 L1,26Z" fill="#f0c020" stroke="#7a5a00" stroke-width="0.9"/><path d="M1,17 L16,24 L33,15 M16,24 V33" fill="none" stroke="#7a5a00" stroke-width="0.9"/><path d="M16,24 L33,15 V24 L16,33Z" fill="#d8a010"/><path d="M15,16 L23,13 L27,15 L19,18Z" fill="#f8dc60" stroke="#a08000" stroke-width="0.5"/><path d="M3,4 Q14,-1 19,9 L21,6 L22,15 L14,13 L17,11 Q13,5 6,8Z" fill="#50c028" stroke="#2a7010" stroke-width="0.7"/></g>
<g transform="translate(1405,576) scale(1)"><ellipse cx="11" cy="5" rx="10" ry="4.5" fill="#f8e470" stroke="#8a7000" stroke-width="0.8"/><path d="M1,5 V22 Q11,28 21,22 V5" fill="#e8c828" stroke="#8a7000" stroke-width="0.8"/><ellipse cx="11" cy="5" rx="10" ry="4.5" fill="#f8e470" stroke="#8a7000" stroke-width="0.8"/><path d="M6,18 Q16,13 22,22 L24,19 L25,27 L17,25 L20,23 Q15,18 9,21Z" fill="#50c028" stroke="#2a7010" stroke-width="0.7"/></g>
<g transform="translate(1405,614) scale(1)"><rect x="1.5" y="1.5" width="23" height="25" fill="#f6f6f6" stroke="#c8c8c8"/><path d="M4,5 H22" stroke="#ddd" stroke-width="1.5"/><path d="M7,19 L17,7 L21,11 L11,23 L6,24Z" fill="#e8c818" stroke="#333" stroke-width="0.9"/><path d="M6,24 L7,19 L11,23Z" fill="#222"/></g>
</g>
<line x1="273" y1="749.5" x2="838" y2="749.5" stroke="#d9d9d9" stroke-width="1" />
<rect x="275.5" y="728.5" width="113" height="21" fill="#f0f0f0" stroke="#d9d9d9"/>
<rect x="388.5" y="728.5" width="153" height="21" fill="#f0f0f0" stroke="#d9d9d9"/>
<rect x="541.5" y="728.5" width="135" height="21" fill="#f0f0f0" stroke="#d9d9d9"/>
<rect x="676.5" y="728.5" width="161" height="22" fill="#ffffff" stroke="#d9d9d9"/>
<g transform="translate(284,731) scale(1.0)"><path d="M1,1 H9 V4 H4.5 V6.5 H8 V9.5 H4.5 V15 H1 Z" fill="#e01010" stroke="#8a0000" stroke-width="0.6"/><polygon points="16.00,10.00 14.51,11.45 14.54,13.54 12.45,13.51 11.00,15.00 9.55,13.51 7.46,13.54 7.49,11.45 6.00,10.00 7.49,8.55 7.46,6.46 9.55,6.49 11.00,5.00 12.45,6.49 14.54,6.46 14.51,8.55" fill="#4a78b8" stroke="#2a4f8a" stroke-width="0.5"/><circle cx="11" cy="10" r="1.6" fill="#fff"/></g>
<text x="304" y="744" font-family="'Liberation Sans', sans-serif" font-size="12" fill="#000" font-weight="normal" text-anchor="start" textLength="50.5" lengthAdjust="spacingAndGlyphs" >Start page</text>
<rect x="360.5" y="732.5" width="13" height="13" rx="1.5" fill="#d4d4d4" stroke="#a8a8a8"/><path d="M363.5,735.5 L370.5,742.5 M370.5,735.5 L363.5,742.5" stroke="#fff" stroke-width="1.6"/>
<g transform="translate(399,731) scale(1.0)"><path d="M1,1 H9 V4 H4.5 V6.5 H8 V9.5 H4.5 V15 H1 Z" fill="#e01010" stroke="#8a0000" stroke-width="0.6"/><polygon points="16.00,10.00 14.51,11.45 14.54,13.54 12.45,13.51 11.00,15.00 9.55,13.51 7.46,13.54 7.49,11.45 6.00,10.00 7.49,8.55 7.46,6.46 9.55,6.49 11.00,5.00 12.45,6.49 14.54,6.46 14.51,8.55" fill="#4a78b8" stroke="#2a4f8a" stroke-width="0.5"/><circle cx="11" cy="10" r="1.6" fill="#fff"/></g>
<text x="419" y="744" font-family="'Liberation Sans', sans-serif" font-size="12" fill="#000" font-weight="normal" text-anchor="start" textLength="89.6" lengthAdjust="spacingAndGlyphs" >Doorbell Holder : 1</text>
<rect x="513.5" y="732.5" width="13" height="13" rx="1.5" fill="#d4d4d4" stroke="#a8a8a8"/><path d="M516.5,735.5 L523.5,742.5 M523.5,735.5 L516.5,742.5" stroke="#fff" stroke-width="1.6"/>
<g transform="translate(553,731) scale(1.0)"><path d="M1,1 H9 V4 H4.5 V6.5 H8 V9.5 H4.5 V15 H1 Z" fill="#e01010" stroke="#8a0000" stroke-width="0.6"/><polygon points="16.00,10.00 14.51,11.45 14.54,13.54 12.45,13.51 11.00,15.00 9.55,13.51 7.46,13.54 7.49,11.45 6.00,10.00 7.49,8.55 7.46,6.46 9.55,6.49 11.00,5.00 12.45,6.49 14.54,6.46 14.51,8.55" fill="#4a78b8" stroke="#2a4f8a" stroke-width="0.5"/><circle cx="11" cy="10" r="1.6" fill="#fff"/></g>
<text x="572" y="744" font-family="'Liberation Sans', sans-serif" font-size="12" fill="#000" font-weight="normal" text-anchor="start" textLength="74" lengthAdjust="spacingAndGlyphs" >Unnamed1 : 1*</text>
<rect x="650.5" y="732.5" width="13" height="13" rx="1.5" fill="#d4d4d4" stroke="#a8a8a8"/><path d="M653.5,735.5 L660.5,742.5 M660.5,735.5 L653.5,742.5" stroke="#fff" stroke-width="1.6"/>
<g transform="translate(690,732) scale(1.0)"><path d="M1,1 H9 V4 H4.5 V6.5 H8 V9.5 H4.5 V15 H1 Z" fill="#e01010" stroke="#8a0000" stroke-width="0.6"/><polygon points="16.00,10.00 14.51,11.45 14.54,13.54 12.45,13.51 11.00,15.00 9.55,13.51 7.46,13.54 7.49,11.45 6.00,10.00 7.49,8.55 7.46,6.46 9.55,6.49 11.00,5.00 12.45,6.49 14.54,6.46 14.51,8.55" fill="#4a78b8" stroke="#2a4f8a" stroke-width="0.5"/><circle cx="11" cy="10" r="1.6" fill="#fff"/></g>
<text x="709.5" y="745" font-family="'Liberation Sans', sans-serif" font-size="12" fill="#000" font-weight="normal" text-anchor="start" textLength="97" lengthAdjust="spacingAndGlyphs" >tomu_0.4_case : 1*</text>
<rect x="810.5" y="733.5" width="13" height="13" rx="1.5" fill="#e8583a" stroke="#c04020"/><path d="M813.5,736.5 L820.5,743.5 M820.5,736.5 L813.5,743.5" stroke="#fff" stroke-width="1.6"/>
<rect x="0" y="757" width="1445" height="19" fill="#dadada" />
<line x1="0" y1="757.5" x2="1445" y2="757.5" stroke="#c4c4c4" stroke-width="1" />
<line x1="0" y1="775.5" x2="1445" y2="775.5" stroke="#c4c4c4" stroke-width="1" />
<text x="2.5" y="771" font-family="'Liberation Sans', sans-serif" font-size="12" fill="#000" font-weight="normal" text-anchor="start" textLength="72.5" lengthAdjust="spacingAndGlyphs" >Python console</text>
<g transform="translate(1414,762)"><rect x="2.5" y="0.5" width="6" height="5" fill="none" stroke="#000" stroke-width="1.3"/><rect x="0.5" y="3.5" width="6" height="5" fill="#d9d9d9" stroke="#000" stroke-width="1.3"/></g>
<path d="M1431,762 L1439,770 M1439,762 L1431,770" stroke="#000" stroke-width="1.4"/>
<rect x="1.5" y="778.5" width="1442" height="103" fill="#ffffff" stroke="#828790" stroke-width="1" />
<rect x="1427" y="779" width="16" height="102" fill="#f0f0f0" />
<rect x="1428" y="846" width="14" height="18" fill="#cdcdcd" />
<path d="M1431,790 L1435,786 L1439,790" fill="none" stroke="#606060" stroke-width="1.3"/><path d="M1431,872 L1435,876 L1439,872" fill="none" stroke="#606060" stroke-width="1.3"/>
<text x="6" y="791" font-family="'Liberation Mono', monospace" font-size="13.33" xml:space="preserve"><tspan fill="#a0a0a0">&gt;&gt;&gt; </tspan><tspan fill="#000">Gui</tspan><tspan fill="#a0a0a0">.</tspan><tspan fill="#000">getDocument</tspan><tspan fill="#a0a0a0">(</tspan><tspan fill="#ff0000">"tomu_0_4_case"</tspan><tspan fill="#a0a0a0">)</tspan><tspan fill="#a0a0a0">.</tspan><tspan fill="#000">getObject</tspan><tspan fill="#a0a0a0">(</tspan><tspan fill="#ff0000">"Shape007"</tspan><tspan fill="#a0a0a0">)</tspan><tspan fill="#a0a0a0">.</tspan><tspan fill="#000">Visibility</tspan><tspan fill="#a0a0a0">=</tspan><tspan fill="#000">True</tspan></text>
<text x="6" y="807" font-family="'Liberation Mono', monospace" font-size="13.33" xml:space="preserve"><tspan fill="#a0a0a0">&gt;&gt;&gt; </tspan><tspan fill="#000">Gui</tspan><tspan fill="#a0a0a0">.</tspan><tspan fill="#000">getDocument</tspan><tspan fill="#a0a0a0">(</tspan><tspan fill="#ff0000">"tomu_0_4_case"</tspan><tspan fill="#a0a0a0">)</tspan><tspan fill="#a0a0a0">.</tspan><tspan fill="#000">getObject</tspan><tspan fill="#a0a0a0">(</tspan><tspan fill="#ff0000">"Shape008"</tspan><tspan fill="#a0a0a0">)</tspan><tspan fill="#a0a0a0">.</tspan><tspan fill="#000">Visibility</tspan><tspan fill="#a0a0a0">=</tspan><tspan fill="#000">True</tspan></text>
<text x="6" y="823" font-family="'Liberation Mono', monospace" font-size="13.33" xml:space="preserve"><tspan fill="#a0a0a0">&gt;&gt;&gt; </tspan><tspan fill="#000">Gui</tspan><tspan fill="#a0a0a0">.</tspan><tspan fill="#000">getDocument</tspan><tspan fill="#a0a0a0">(</tspan><tspan fill="#ff0000">"tomu_0_4_case"</tspan><tspan fill="#a0a0a0">)</tspan><tspan fill="#a0a0a0">.</tspan><tspan fill="#000">getObject</tspan><tspan fill="#a0a0a0">(</tspan><tspan fill="#ff0000">"Shape009"</tspan><tspan fill="#a0a0a0">)</tspan><tspan fill="#a0a0a0">.</tspan><tspan fill="#000">Visibility</tspan><tspan fill="#a0a0a0">=</tspan><tspan fill="#000">True</tspan></text>
<text x="6" y="839" font-family="'Liberation Mono', monospace" font-size="13.33" xml:space="preserve"><tspan fill="#a0a0a0">&gt;&gt;&gt; </tspan><tspan fill="#000">Gui</tspan><tspan fill="#a0a0a0">.</tspan><tspan fill="#000">getDocument</tspan><tspan fill="#a0a0a0">(</tspan><tspan fill="#ff0000">"tomu_0_4_case"</tspan><tspan fill="#a0a0a0">)</tspan><tspan fill="#a0a0a0">.</tspan><tspan fill="#000">getObject</tspan><tspan fill="#a0a0a0">(</tspan><tspan fill="#ff0000">"USB_2_0_type_A_Dual_Stacked_jack_PCB"</tspan><tspan fill="#a0a0a0">)</tspan><tspan fill="#a0a0a0">.</tspan><tspan fill="#000">Visibility</tspan><tspan fill="#a0a0a0">=</tspan><tspan fill="#000">True</tspan></text>
<text x="6" y="855" font-family="'Liberation Mono', monospace" font-size="13.33" xml:space="preserve"><tspan fill="#a0a0a0">&gt;&gt;&gt; </tspan><tspan fill="#000">Gui</tspan><tspan fill="#a0a0a0">.</tspan><tspan fill="#000">getDocument</tspan><tspan fill="#a0a0a0">(</tspan><tspan fill="#ff0000">"tomu_0_4_case"</tspan><tspan fill="#a0a0a0">)</tspan><tspan fill="#a0a0a0">.</tspan><tspan fill="#000">getObject</tspan><tspan fill="#a0a0a0">(</tspan><tspan fill="#ff0000">"USB_2_0_type_A_Dual_Stacked_jack_PCB"</tspan><tspan fill="#a0a0a0">)</tspan><tspan fill="#a0a0a0">.</tspan><tspan fill="#000">Visibility</tspan><tspan fill="#a0a0a0">=</tspan><tspan fill="#000">False</tspan></text>
<text x="6" y="871" font-family="'Liberation Mono', monospace" font-size="13.33" xml:space="preserve"><tspan fill="#a0a0a0">&gt;&gt;&gt;</tspan></text>
<text x="7.5" y="901" font-family="'Liberation Sans', sans-serif" font-size="12" fill="#000" font-weight="normal" text-anchor="start" textLength="365.5" lengthAdjust="spacingAndGlyphs" >Preselected: tomu_0_4_case.YZ_Plane. (0.000000,-1.476785,-10.000000)</text>
<rect x="1242.5" y="891.5" width="8" height="12" rx="4" fill="none" stroke="#333" stroke-width="1.2"/><line x1="1246.5" y1="892" x2="1246.5" y2="896" stroke="#333" stroke-width="1"/>
<text x="1258" y="901" font-family="'Liberation Sans', sans-serif" font-size="12" fill="#000" font-weight="normal" text-anchor="start" textLength="24" lengthAdjust="spacingAndGlyphs" >CAD</text>
<path d="M1283,895 h8 l-4,4.5z" fill="#000"/>
<line x1="1299.5" y1="884" x2="1299.5" y2="907" stroke="#d8d8d8" stroke-width="1" />
<text x="1304" y="901" font-family="'Liberation Sans', sans-serif" font-size="12" fill="#000" font-weight="normal" text-anchor="start" textLength="115" lengthAdjust="spacingAndGlyphs" >26.24 mm x 13.61 mm</text>
<line x1="1425.5" y1="884" x2="1425.5" y2="907" stroke="#d8d8d8" stroke-width="1" />
<rect x="1439" y="907" width="1.5" height="1.5" fill="#b0b0b0" />
<rect x="1436" y="907" width="1.5" height="1.5" fill="#b0b0b0" />
<rect x="1433" y="907" width="1.5" height="1.5" fill="#b0b0b0" />
<rect x="1439" y="904" width="1.5" height="1.5" fill="#b0b0b0" />
<rect x="1436" y="904" width="1.5" height="1.5" fill="#b0b0b0" />
<rect x="1439" y="901" width="1.5" height="1.5" fill="#b0b0b0" />
<rect x="0.5" y="0.5" width="1444" height="911" fill="none" stroke="#6aa6e6" stroke-width="1"/>
</svg></body></html>
